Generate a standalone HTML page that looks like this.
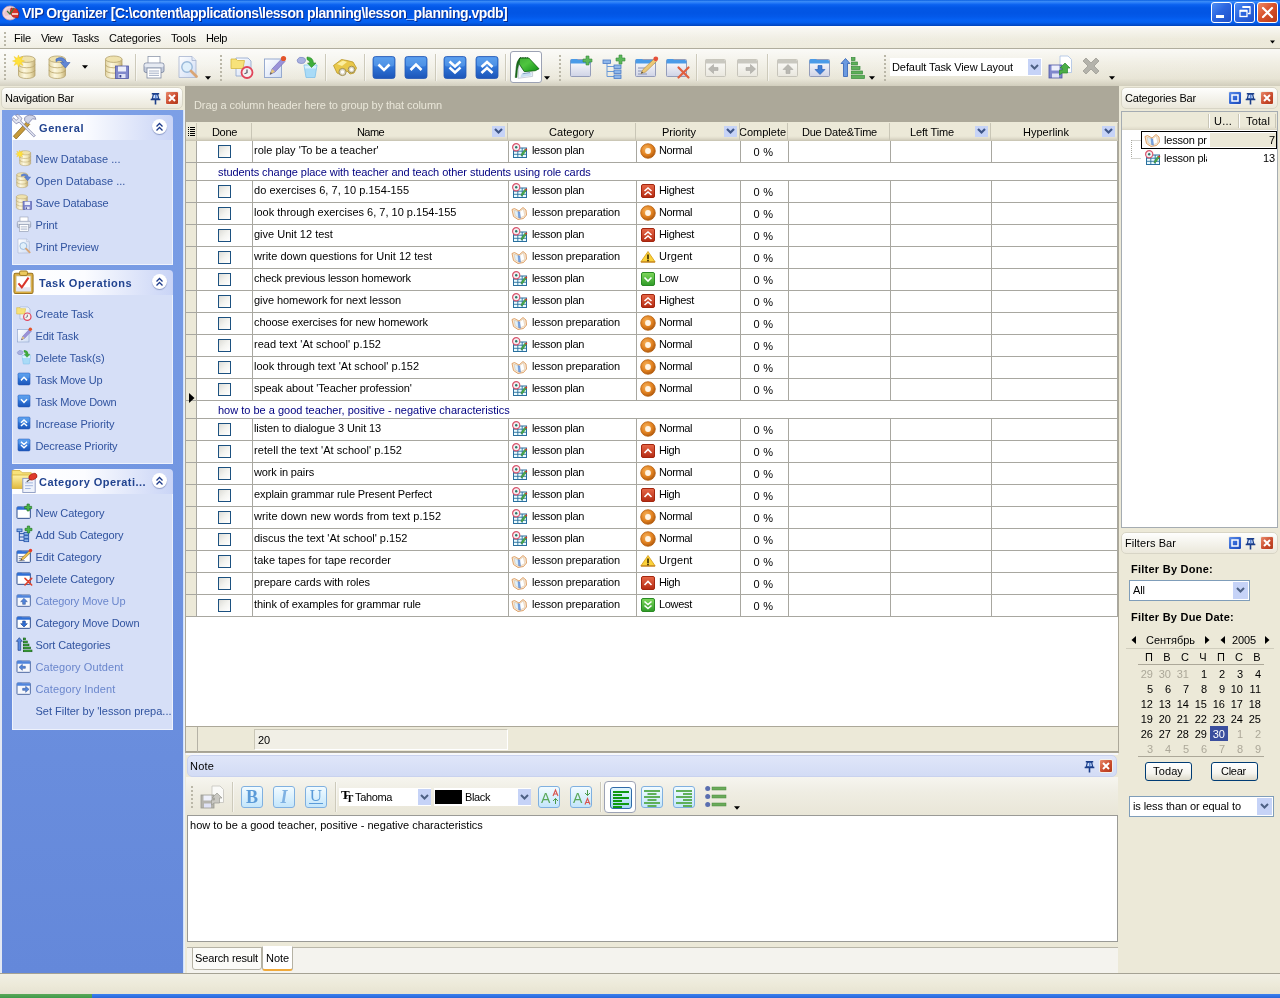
<!DOCTYPE html>
<html lang="en"><head><meta charset="utf-8"><title>VIP Organizer</title>
<style>
*{box-sizing:border-box;margin:0;padding:0}
html,body{width:1280px;height:998px;overflow:hidden}
body{will-change:transform;background:#ece9d8;font-family:"Liberation Sans","DejaVu Sans",sans-serif;font-size:11px;color:#000;position:relative;line-height:13px}
.a{position:absolute}
.t{position:absolute;white-space:nowrap;line-height:13px;height:13px}
svg{position:absolute;overflow:visible}
#title{left:0;top:0;width:1280px;height:26px;background:linear-gradient(to bottom,#0a5fe0 0%,#3a8bf7 6%,#2a7ef8 10%,#0b62f0 18%,#0257e6 30%,#0255e4 50%,#0359ea 64%,#0662f4 78%,#0560ee 86%,#0352d8 93%,#0143b8 100%)}
#title .tt{font-size:14px;font-weight:bold;color:#fff;line-height:16px;height:16px;text-shadow:1px 1px 0 #0a2a8a}
.cb{position:absolute;top:2px;width:21px;height:21px;border:1px solid #fff;border-radius:3px}
.cb.b{background:linear-gradient(135deg,#4f8ff5 0%,#2c66e0 45%,#1f50c8 100%)}
.cb.r{background:linear-gradient(135deg,#ec8a66 0%,#d9532c 45%,#b93a17 100%)}
#menu{left:0;top:26px;width:1280px;height:22px;background:linear-gradient(to bottom,#ffffff 0,rgba(255,255,255,.6) 2px,rgba(255,255,255,0) 60%,rgba(236,233,216,.5) 100%),linear-gradient(to right,#f6f5ef 0%,#f1efe5 50%,#edeadb 100%)}
#tb{left:0;top:49px;width:1280px;height:37px;background:linear-gradient(to bottom,rgba(255,255,255,.75) 0,rgba(255,255,255,.25) 40%,rgba(225,221,204,.35) 80%,rgba(200,196,178,.75) 100%),linear-gradient(to right,#f4f3ec 0%,#efede2 50%,#ebe8d9 100%)}
.sep{position:absolute;top:5px;width:1px;height:27px;background:#cdcabb;box-shadow:1px 0 0 rgba(255,255,255,.5)}
.grip{position:absolute;width:2px;background-image:linear-gradient(to bottom,#bab7a8 0,#bab7a8 2px,transparent 2px,transparent 4px);background-size:2px 4px}
.pressed{position:absolute;border:1px solid #9ca2b4;border-radius:3px;background:#fff}
.ph{position:absolute;height:22px;border:1px solid #d8d5c6;border-radius:5px;background:linear-gradient(to bottom,#fefefd 0%,#f4f3ec 50%,#ebe8db 100%)}
.xb{position:absolute;width:14px;height:14px;border-radius:2px;background:linear-gradient(135deg,#e9896a,#c8482a 60%,#b13a1c);border:1px solid #f3f0ea}
.mb{position:absolute;width:14px;height:14px;border-radius:2px;background:linear-gradient(135deg,#5f8fe8,#2b5fd0 60%,#1e49b4);border:1px solid #f3f0ea}
#nav{left:2px;top:110px;width:181px;height:863px;background:linear-gradient(to bottom,#7c9fe6 0%,#7397e2 40%,#698ddd 75%,#6488da 100%)}
.gh{position:absolute;left:10px;width:161px;height:25px;border-radius:4px 4px 0 0;background:linear-gradient(to right,#ffffff 0%,#fbfcff 45%,#c9d4f6 100%)}
.gh .t{font-weight:bold;color:#21438f}
.gb{position:absolute;left:10px;width:161px;background:#d6dff7;border:1px solid #eef2fc;border-top:0}
.ni{position:absolute;color:#30539f;white-space:nowrap;height:13px;line-height:13px}
.ni.d{color:#6a86cc}
.chev{position:absolute;left:140px;top:4px;width:15px;height:15px;border-radius:50%;background:#fff;box-shadow:0 1px 1px rgba(60,80,140,.45)}
#gridbox{left:185px;top:86px;width:934px;height:667px;background:#fff;border:1px solid #aca899;border-top:0;overflow:hidden}
#gby{left:0;top:0;width:933px;height:36px;background:#aca899}
#gby .t{color:#e9e6d8}
#ghead{left:0;top:36px;width:933px;height:19px;background:linear-gradient(to bottom,#ece9d8 0,#ece9d8 14px,#e2decd 16px,#d2cebd 18px,#c4c0ae 19px)}
.hc{position:absolute;top:1px;height:17px;border-right:1px solid #c9c6b6;overflow:hidden}
.fb{position:absolute;width:13px;height:11px;background:#c6d3f7}
.row{position:absolute;left:0;width:933px;border-bottom:1px solid #a8a7a0}
.row .ind{position:absolute;left:0;top:0;bottom:0;width:11px;background:#ece9d8;border-right:1px solid #a8a7a0}
.vl{position:absolute;top:0;bottom:0;width:1px;background:#a8a7a0}
.ck{position:absolute;left:32px;top:4px;width:13px;height:13px;border:1px solid #1c5180;background:linear-gradient(135deg,#dcdcd7 0%,#f3f3ef 50%,#fff 100%)}
.pv{color:#000080}
#gfoot{left:0;top:640px;width:933px;height:27px;background:#ece9d8;border-top:1px solid #aca899;border-bottom:2px solid #a5a294}
#cnt{left:68px;top:2px;width:254px;height:21px;background:#f1efe6;border:1px solid #c9c6b6;border-right-color:#fff;border-bottom-color:#fff}
#ntb{left:186px;top:777px;width:932px;height:38px;background:linear-gradient(to bottom,#f6f5ef 0%,#efede3 40%,#e9e6d7 100%)}
.nb{position:absolute;width:22px;height:22px;border:1px solid #7fb0e0;border-radius:3px;background:linear-gradient(to bottom,#f2fbff,#c4e6fb)}
.nb.p{border-color:#2f6aa8;background:linear-gradient(to bottom,#e4f6ff,#a9d8f5)}
#nbody{left:187px;top:815px;width:931px;height:127px;background:#fff;border:1px solid #9a9a96}
#tabs{left:187px;top:947px;width:931px;height:27px;background:#f4f3ee;border-top:1px solid #b9b6a8;border-bottom:1px solid #c9c6b8}
.tab{position:absolute;top:-1px;height:23px;border:1px solid #b5b2a4;border-radius:0 0 3px 3px;background:#fbfbf8}
.tab.sel{top:-2px;height:25px;border-bottom:2px solid #f0a93a;background:#fff;border-top-color:#fff}
#ctree{left:1121px;top:111px;width:157px;height:417px;background:#fff;border:1px solid #a5acb2}
#filt{left:1121px;top:555px;width:156px;height:400px}
.cbx{position:absolute;background:#fff;border:1px solid #7f9db9}
.cbtn{position:absolute;background:#c6d3f7}
.btn{position:absolute;height:19px;border:1px solid #003c74;border-radius:3px;background:linear-gradient(to bottom,#fff 0%,#f5f4ee 60%,#dcd8c8 100%)}
#status{left:0;top:973px;width:1280px;height:21px;background:linear-gradient(to bottom,#f1efe4 0,#ece9d8 60%,#e6e3d2 100%);border-top:1px solid #a5a294}
#task{left:0;top:994px;width:1280px;height:4px;background:linear-gradient(to bottom,#3a80f0,#2a66d8)}
#start{left:0;top:0;width:92px;height:4px;background:linear-gradient(to bottom,#5aa85a,#3f9a48)}
</style></head>
<body>
<svg width="0" height="0" style="position:absolute;left:0;top:0"><defs>
<linearGradient id="gdb" x1="0" y1="0" x2="1" y2="0"><stop offset="0" stop-color="#e2d4a0"></stop><stop offset=".35" stop-color="#fdf8e0"></stop><stop offset=".7" stop-color="#f0e5b8"></stop><stop offset="1" stop-color="#c4b078"></stop></linearGradient>
<linearGradient id="gbl" x1="0" y1="0" x2="0" y2="1"><stop offset="0" stop-color="#4f95ea"></stop><stop offset=".5" stop-color="#2f74d6"></stop><stop offset="1" stop-color="#1c55b8"></stop></linearGradient>
<linearGradient id="grd" x1="0" y1="0" x2="0" y2="1"><stop offset="0" stop-color="#e8694a"></stop><stop offset="1" stop-color="#b32a12"></stop></linearGradient>
<linearGradient id="ggr" x1="0" y1="0" x2="0" y2="1"><stop offset="0" stop-color="#7fd95c"></stop><stop offset="1" stop-color="#2f9a28"></stop></linearGradient>
<radialGradient id="gor" cx=".4" cy=".35" r=".7"><stop offset="0" stop-color="#f7b25a"></stop><stop offset=".6" stop-color="#e0801f"></stop><stop offset="1" stop-color="#a9540c"></stop></radialGradient>
<linearGradient id="gwin" x1="0" y1="0" x2="0" y2="1"><stop offset="0" stop-color="#ffffff"></stop><stop offset="1" stop-color="#cfd3e6"></stop></linearGradient>
<linearGradient id="gwing" x1="0" y1="0" x2="0" y2="1"><stop offset="0" stop-color="#fdfdfb"></stop><stop offset="1" stop-color="#e9e7de"></stop></linearGradient>
<linearGradient id="gpg" x1="0" y1="0" x2="1" y2="1"><stop offset="0" stop-color="#ffffff"></stop><stop offset="1" stop-color="#cfdcf4"></stop></linearGradient>
<linearGradient id="gbtn" x1="0" y1="0" x2="0" y2="1"><stop offset="0" stop-color="#e9f6ff"></stop><stop offset="1" stop-color="#b4dcf7"></stop></linearGradient>
<linearGradient id="gnb" x1="0" y1="0" x2="1" y2="1"><stop offset="0" stop-color="#3fae35"></stop><stop offset=".4" stop-color="#4fc53f"></stop><stop offset="1" stop-color="#0f8f14"></stop></linearGradient>
<linearGradient id="gyl" x1="0" y1="0" x2="0" y2="1"><stop offset="0" stop-color="#fff3a8"></stop><stop offset="1" stop-color="#e0b93c"></stop></linearGradient>
</defs></svg>
<div class="a" id="title">
<svg style="left:2px;top:4px" width="16" height="16" viewBox="0 0 16 16"><ellipse cx="8" cy="9" rx="7.500" ry="7" fill="#f3d7dc" stroke="#c9a3b0" stroke-width=".8"></ellipse><path d="M2 9q3-6 8-5l2 3-4 4-5 1z" fill="#e9c3cc"></path><path d="M9 4l6 1 2 4-1 5-5-1-3-4z" fill="#d8352a" stroke="#9c1a14" stroke-width=".6"></path><path d="M5 7l3 3 4-6" fill="none" stroke="#3a7a3a" stroke-width="1.200"></path><path d="M10 10h6" stroke="#fff" stroke-width="1.400"></path></svg>
<div class="t tt" style="left: 22px; top: 5px; letter-spacing: -0.48px;">VIP Organizer [C:\content\applications\lesson planning\lesson_planning.vpdb]</div>
<div class="cb b" style="left:1211px"><svg style="left:4px;top:12px" width="8" height="3" viewBox="0 0 8 3"><rect width="8" height="3" fill="#fff"></rect></svg>
</div>
<div class="cb b" style="left:1234px"><svg style="left:4px;top:3px" width="12" height="12" viewBox="0 0 12 12"><path d="M3.500 1h7.500v6.500h-2" fill="none" stroke="#fff" stroke-width="1.300"></path><path d="M3.500 1h7.500" stroke="#fff" stroke-width="2"></path><rect x="1" y="4.500" width="7" height="6" fill="none" stroke="#fff" stroke-width="1.300"></rect><path d="M1 4.800h7" stroke="#fff" stroke-width="2"></path></svg>
</div>
<div class="cb r" style="left:1257px"><svg style="left:4px;top:4px" width="11" height="11" viewBox="0 0 11 11"><path d="M1 1l9 9M10 1l-9 9" stroke="#fff" stroke-width="2.200" stroke-linecap="round"></path></svg>
</div>
</div>
<div class="a" id="menu">
<div class="grip" style="left:4px;top:6px;height:16px"></div>
<div class="t" style="left: 14px; top: 6px; letter-spacing: -0.18px;">File</div>
<div class="t" style="left: 41px; top: 6px; letter-spacing: -0.66px;">View</div>
<div class="t" style="left: 72px; top: 6px; letter-spacing: -0.22px;">Tasks</div>
<div class="t" style="left: 109px; top: 6px; letter-spacing: -0.12px;">Categories</div>
<div class="t" style="left: 171px; top: 6px; letter-spacing: -0.14px;">Tools</div>
<div class="t" style="left: 206px; top: 6px; letter-spacing: -0.41px;">Help</div>
<svg style="left:1270px;top:14px" width="5" height="4" viewBox="0 0 7 4"><path d="M0 0h7l-3.500 4z" fill="#000"></path></svg>
</div>
<div class="a" style="left:0;top:48px;width:1280px;height:1px;background:#b0ad9e"></div>
<div class="a" id="tb">
<div class="grip" style="left:4px;top:5px;height:26px"></div>
<div class="a pressed" style="left:510px;top:2px;width:32px;height:32px;"></div>
<svg style="left:515px;top:6px" width="24" height="24" viewBox="0 0 24 24"><path d="M3.900 9l-.7 14.300 14.400-1.900v-4.400l-8.300-.4z" fill="#f4f8fd" stroke="#b4bccb" stroke-width=".7"></path><path d="M6 19.500l10.500-1.800v2.800l-11 1.800z" fill="#c9def2"></path><path d="M7.500 18.800l7.500-1.200" stroke="#5f86b0" stroke-width=".8"></path><path d="M4.700 3h9.100l10.200 10.800-3.700 1.900-11 .9-5.300-8.100z" fill="url(#gnb)" stroke="#0b5f0e" stroke-width=".8" stroke-linejoin="round"></path><path d="M4.700 3q-3 3-3.500 9t-1 10.500h1.700q0-8 2-14z" fill="#1a6f1d" stroke="#0f5212" stroke-width=".5"></path><path d="M5.500 3.200v-1M7.200 3.200v-1M8.900 3.200v-1M10.600 3.200v-1M12.300 3.200v-1" stroke="#0c4a10" stroke-width=".9"></path></svg>
<svg style="left:13px;top:6px" width="24" height="24" viewBox="0 0 24 24"><path d="M5.5 4.2 v16.1 a8.25 3.2 0 0 0 16.5 0 v-16.1 z" fill="url(#gdb)" stroke="#b5a370" stroke-width=".8"></path><ellipse cx="13.75" cy="4.2" rx="8.25" ry="3.2" fill="#efe2ae" stroke="#b5a370" stroke-width=".8"></ellipse><path d="M5.5 9.566666666666666 a8.25 3.2 0 0 0 16.5 0" fill="none" stroke="#b7a36a" stroke-width=".8"></path><path d="M5.5 14.933333333333334 a8.25 3.2 0 0 0 16.5 0" fill="none" stroke="#b7a36a" stroke-width=".8"></path><path d="M5.5 0 l1.2 3.3 3.3-1.8-1.8 3.3 3.3 1.2-3.3 1.2 1.8 3.3-3.3-1.8-1.2 3.3-1.2-3.3-3.3 1.8 1.8-3.3-3.3-1.2 3.3-1.2-1.8-3.300 3.300 1.800z" fill="#ffe23a" stroke="#f3c41a" stroke-width=".4"></path></svg>
<svg style="left:48px;top:6px" width="24" height="24" viewBox="0 0 24 24"><path d="M1 4.2 v16.1 a8.25 3.2 0 0 0 16.5 0 v-16.1 z" fill="url(#gdb)" stroke="#b5a370" stroke-width=".8"></path><ellipse cx="9.25" cy="4.2" rx="8.25" ry="3.2" fill="#efe2ae" stroke="#b5a370" stroke-width=".8"></ellipse><path d="M1 9.566666666666666 a8.25 3.2 0 0 0 16.5 0" fill="none" stroke="#b7a36a" stroke-width=".8"></path><path d="M1 14.933333333333334 a8.25 3.2 0 0 0 16.5 0" fill="none" stroke="#b7a36a" stroke-width=".8"></path><path d="M8 4q7-4 11 3.500h3l-4.500 5.500-5-5.500h3q-2.500-3.500-7.500-1z" fill="#5f86d6" stroke="#3e62b0" stroke-width=".6"></path></svg>
<svg style="left:105px;top:6px" width="24" height="24" viewBox="0 0 24 24"><path d="M0.5 4.2 v16.1 a8.25 3.2 0 0 0 16.5 0 v-16.1 z" fill="url(#gdb)" stroke="#b5a370" stroke-width=".8"></path><ellipse cx="8.75" cy="4.2" rx="8.25" ry="3.2" fill="#efe2ae" stroke="#b5a370" stroke-width=".8"></ellipse><path d="M0.5 9.566666666666666 a8.25 3.2 0 0 0 16.5 0" fill="none" stroke="#b7a36a" stroke-width=".8"></path><path d="M0.5 14.933333333333334 a8.25 3.2 0 0 0 16.5 0" fill="none" stroke="#b7a36a" stroke-width=".8"></path><rect x="10.500" y="11" width="13" height="12.500" fill="#8088cc" stroke="#5058a6" stroke-width=".8"></rect><rect x="13" y="11.500" width="8" height="5" fill="#eceefb"></rect><rect x="13.500" y="19" width="7" height="4" fill="#dfe2f6"></rect><rect x="14.500" y="20" width="1.800" height="2.500" fill="#3c4590"></rect></svg>
<svg style="left:142px;top:6px" width="24" height="24" viewBox="0 0 24 24"><rect x="6" y="1.500" width="12" height="7.500" fill="#fff" stroke="#8e98ac" stroke-width=".8"></rect><rect x="2" y="8" width="20" height="9.500" rx="2" fill="#c3cbdb" stroke="#76829c" stroke-width=".8"></rect><rect x="2.500" y="8.500" width="19" height="3.500" rx="1.500" fill="#e6eaf2"></rect><rect x="5" y="13" width="14" height="10" fill="#fff" stroke="#7f8aa2" stroke-width=".8"></rect><path d="M7 16h10M7 18.200h10M7 20.400h10" stroke="#9aa6c0" stroke-width=".9"></path></svg>
<svg style="left:176px;top:6px" width="24" height="24" viewBox="0 0 24 24"><path d="M3 1.500h13l4 4v17h-17z" fill="url(#gpg)" stroke="#a7b4cf" stroke-width=".8"></path><path d="M16 1.500v4h4" fill="#e4ebf8" stroke="#a7b4cf" stroke-width=".8"></path><circle cx="11" cy="12" r="5.200" fill="#dff0fb" fill-opacity=".9" stroke="#9ab9da" stroke-width="1.400"></circle><path d="M15 16l5.500 5.500" stroke="#d9a574" stroke-width="2.800" stroke-linecap="round"></path></svg>
<svg style="left:230px;top:6px" width="24" height="24" viewBox="0 0 24 24"><path d="M6 3h12l3 3v15h-15z" fill="url(#gpg)" stroke="#8ea3cc" stroke-width=".8"></path><path d="M1 4h5l1.500 1.500h7l-1.500 8h-12z" fill="#f7e27a" stroke="#d4b840" stroke-width=".8"></path><circle cx="17" cy="17.500" r="5.500" fill="#f4f1f1" stroke="#e0455a" stroke-width="1.800"></circle><path d="M17 14.500v3.200l-2.500 1" stroke="#556" stroke-width="1.200" fill="none"></path></svg>
<svg style="left:262px;top:6px" width="24" height="24" viewBox="0 0 24 24"><rect x="2.500" y="4" width="17" height="18.500" fill="url(#gpg)" stroke="#8ea3cc" stroke-width=".9"></rect><path d="M8 19.500l2-5.500 10-10.500 3 3-10 10.500z" fill="#9a92d8" stroke="#6b63b0" stroke-width=".6"></path><path d="M8 19.500l2-5.500 3 2.500z" fill="#e6c77a"></path><path d="M8 19.500l.8-2.200 1.300 1z" fill="#444"></path><circle cx="21.500" cy="3.500" r="2.600" fill="#e3542a"></circle></svg>
<svg style="left:295px;top:6px" width="24" height="24" viewBox="0 0 24 24"><path d="M9 10h13l-2 12.500h-9z" fill="#a9dbf7" stroke="#7fc0ea" stroke-width=".8"></path><path d="M9.500 10.500h12l-.5 3h-11z" fill="#d8f0fc"></path><path d="M2 5q2-4 6-2.500 3 .5 2.500 3.500-1 3-4.500 2.500-4 0-4-3.500z" fill="#a9b1e0" stroke="#7c86c4" stroke-width=".7"></path><path d="M12 2q6 0 6.500 6h2.500l-4.500 4.500-4-4.500h2.500q-.5-3-3-3.500z" fill="#3fae3a" stroke="#2a8a28" stroke-width=".6"></path></svg>
<svg style="left:333px;top:6px" width="24" height="24" viewBox="0 0 24 24"><path d="M.5 10.500l8-6 5.500 1 6 1.500 3.500 6-2.500 5-4 1-3-3-2 1-3.500 3-4.500-2z" fill="#e9c84a" stroke="#b99524" stroke-width=".8"></path><path d="M4 9l6-3.500 4 1.500-5 4z" fill="#fbeea0"></path><circle cx="9.500" cy="17" r="3.600" fill="#d9d4c4" stroke="#9c8a4a" stroke-width=".9"></circle><circle cx="9.500" cy="17" r="1.700" fill="#fff"></circle><circle cx="18.500" cy="14.500" r="3.300" fill="#d9d4c4" stroke="#9c8a4a" stroke-width=".9"></circle><circle cx="18.500" cy="14.500" r="1.500" fill="#fff"></circle></svg>
<svg style="left:372px;top:6px" width="24" height="24" viewBox="0 0 24 24"><rect x="1" y="1.500" width="22" height="22" rx="2.500" fill="url(#gbl)" stroke="#2458b4" stroke-width=".8"></rect><rect x="2" y="2.500" width="20" height="9" rx="2" fill="#6fb0f5" fill-opacity=".45"></rect><path d="M6.500 9.500l5.500 5.500 5.500-5.500" fill="none" stroke="#fff" stroke-width="2.600" stroke-linejoin="miter"></path></svg>
<svg style="left:404px;top:6px" width="24" height="24" viewBox="0 0 24 24"><rect x="1" y="1.500" width="22" height="22" rx="2.500" fill="url(#gbl)" stroke="#2458b4" stroke-width=".8"></rect><rect x="2" y="2.500" width="20" height="9" rx="2" fill="#6fb0f5" fill-opacity=".45"></rect><path d="M6.500 15l5.500-5.500 5.500 5.500" fill="none" stroke="#fff" stroke-width="2.600" stroke-linejoin="miter"></path></svg>
<svg style="left:443px;top:6px" width="24" height="24" viewBox="0 0 24 24"><rect x="1" y="1.500" width="22" height="22" rx="2.500" fill="url(#gbl)" stroke="#2458b4" stroke-width=".8"></rect><rect x="2" y="2.500" width="20" height="9" rx="2" fill="#6fb0f5" fill-opacity=".45"></rect><path d="M6.500 6.500l5.500 5 5.500-5M6.500 12.500l5.500 5 5.500-5" fill="none" stroke="#fff" stroke-width="2.600" stroke-linejoin="miter"></path></svg>
<svg style="left:475px;top:6px" width="24" height="24" viewBox="0 0 24 24"><rect x="1" y="1.500" width="22" height="22" rx="2.500" fill="url(#gbl)" stroke="#2458b4" stroke-width=".8"></rect><rect x="2" y="2.500" width="20" height="9" rx="2" fill="#6fb0f5" fill-opacity=".45"></rect><path d="M6.500 12l5.500-5 5.500 5M6.500 18l5.500-5 5.500 5" fill="none" stroke="#fff" stroke-width="2.600" stroke-linejoin="miter"></path></svg>
<svg style="left:569px;top:6px" width="24" height="24" viewBox="0 0 24 24"><rect x="1.500" y="4.500" width="20" height="17" rx="1" fill="url(#gwin)" stroke="#8a94b4" stroke-width=".9"></rect><path d="M1.500 5.500a1.500 1.500 0 0 1 1.500-1.500h5l1 1h11a1.500 1.500 0 0 1 1.500 1.500v2h-20z" fill="#4a9be8"></path><path d="M14 4h3v-3h3v3h3v3h-3v3h-3v-3h-3z" fill="#5cb85a" stroke="#3a8a3c" stroke-width=".6"></path></svg>
<svg style="left:601px;top:6px" width="24" height="24" viewBox="0 0 24 24"><path d="M6 7v14.500M6 11.500h7M6 16.500h7M6 21.500h7" stroke="#6a9ad8" stroke-width="1" fill="none"></path><rect x="2" y="5" width="7.500" height="3.500" fill="#8fb7ea" stroke="#4a7ac6" stroke-width=".8"></rect><rect x="13" y="10" width="7" height="3.500" fill="#8fb7ea" stroke="#4a7ac6" stroke-width=".8"></rect><rect x="13" y="15" width="7" height="3.500" fill="#8fb7ea" stroke="#4a7ac6" stroke-width=".8"></rect><rect x="13" y="20" width="7" height="3.500" fill="#8fb7ea" stroke="#4a7ac6" stroke-width=".8"></rect><path d="M15 3h3v-3h3v3h3v3h-3v3h-3v-3h-3z" fill="#5cb85a" stroke="#3a8a3c" stroke-width=".6"></path></svg>
<svg style="left:634px;top:6px" width="24" height="24" viewBox="0 0 24 24"><rect x="1.500" y="4.500" width="20" height="17" rx="1" fill="url(#gwin)" stroke="#8a94b4" stroke-width=".9"></rect><path d="M1.500 5.500a1.500 1.500 0 0 1 1.500-1.500h5l1 1h11a1.500 1.500 0 0 1 1.500 1.500v2h-20z" fill="#4a9be8"></path><path d="M4 13h9M4 16h7M4 19h9" stroke="#8a94b4" stroke-width="1"></path><path d="M7 18.500l2-4 11-10.500 2.500 2.500-11 10.500z" fill="#ecc876" stroke="#b08a3a" stroke-width=".6"></path><path d="M7 18.500l.9-2 1.200 1.200z" fill="#444"></path><circle cx="21.800" cy="3.800" r="2.400" fill="#e6503a"></circle></svg>
<svg style="left:665px;top:6px" width="24" height="24" viewBox="0 0 24 24"><rect x="1.500" y="4.500" width="20" height="17" rx="1" fill="url(#gwin)" stroke="#8a94b4" stroke-width=".9"></rect><path d="M1.500 5.500a1.500 1.500 0 0 1 1.500-1.500h5l1 1h11a1.500 1.500 0 0 1 1.500 1.500v2h-20z" fill="#4a9be8"></path><path d="M13.500 12.500l10 10M23.500 12.500l-10 10" stroke="#e0603f" stroke-width="2.200" stroke-linecap="round"></path></svg>
<svg style="left:704px;top:6px" width="24" height="24" viewBox="0 0 24 24"><rect x="1.500" y="4.500" width="20" height="17" rx="1" fill="url(#gwing)" stroke="#c2c0b6" stroke-width=".9"></rect><path d="M1.500 5.500a1.500 1.500 0 0 1 1.500-1.500h5l1 1h11a1.500 1.500 0 0 1 1.500 1.500v2h-20z" fill="#c9c8c0"></path><path d="M4.500 14l5-4.500v3h4.500v3h-4.500v3z" fill="#b9b8b2" stroke="#a9a8a2" stroke-width=".6"></path></svg>
<svg style="left:736px;top:6px" width="24" height="24" viewBox="0 0 24 24"><rect x="1.500" y="4.500" width="20" height="17" rx="1" fill="url(#gwing)" stroke="#c2c0b6" stroke-width=".9"></rect><path d="M1.500 5.500a1.500 1.500 0 0 1 1.500-1.500h5l1 1h11a1.500 1.500 0 0 1 1.500 1.500v2h-20z" fill="#c9c8c0"></path><path d="M19.500 14l-5-4.500v3h-4.500v3h4.500v3z" fill="#b9b8b2" stroke="#a9a8a2" stroke-width=".6"></path></svg>
<svg style="left:776px;top:6px" width="24" height="24" viewBox="0 0 24 24"><rect x="1.500" y="4.500" width="20" height="17" rx="1" fill="url(#gwing)" stroke="#c2c0b6" stroke-width=".9"></rect><path d="M1.500 5.500a1.500 1.500 0 0 1 1.500-1.500h5l1 1h11a1.500 1.500 0 0 1 1.500 1.500v2h-20z" fill="#c9c8c0"></path><path d="M12 9.500l5 5h-3v4h-4v-4h-3z" fill="#b9b8b2" stroke="#a9a8a2" stroke-width=".6"></path></svg>
<svg style="left:808px;top:6px" width="24" height="24" viewBox="0 0 24 24"><rect x="1.500" y="4.500" width="20" height="17" rx="1" fill="url(#gwin)" stroke="#8a94b4" stroke-width=".9"></rect><path d="M1.500 5.500a1.500 1.500 0 0 1 1.500-1.500h5l1 1h11a1.500 1.500 0 0 1 1.500 1.500v2h-20z" fill="#4a9be8"></path><path d="M12 19.500l5-5h-3v-4h-4v4h-3z" fill="#3f7fd6" stroke="#2559b0" stroke-width=".6"></path></svg>
<svg style="left:840px;top:6px" width="24" height="24" viewBox="0 0 24 24"><path d="M5.500 3.500l4.500 5h-2.500v13h-4v-13h-2.500z" fill="#6a9ae0" stroke="#2f5fb4" stroke-width=".8"></path><rect x="11.500" y="2.5" width="3.5" height="3" fill="#5fb05a" stroke="#3a8a3c" stroke-width=".7"></rect><rect x="11.500" y="7" width="6" height="3" fill="#5fb05a" stroke="#3a8a3c" stroke-width=".7"></rect><rect x="11.500" y="11.5" width="8.5" height="3" fill="#5fb05a" stroke="#3a8a3c" stroke-width=".7"></rect><rect x="11.500" y="16" width="11" height="3" fill="#5fb05a" stroke="#3a8a3c" stroke-width=".7"></rect><rect x="11.500" y="20.5" width="13" height="3" fill="#5fb05a" stroke="#3a8a3c" stroke-width=".7"></rect></svg>
<svg style="left:1048px;top:6px" width="24" height="24" viewBox="0 0 24 24"><path d="M12 1h8l3.500 3.500v13h-11.500z" fill="#fff" stroke="#a9c0e4" stroke-width=".8"></path><rect x="1" y="10" width="13" height="13" fill="#7f87cc" stroke="#4d56a3" stroke-width=".8"></rect><rect x="3.500" y="10.500" width="8" height="5" fill="#eef0fb"></rect><rect x="4" y="18.500" width="7" height="4" fill="#dfe2f5"></rect><path d="M17 8l5 5h-2.500v5h-5.500l-2.500 2v-5h3v-2h-2.500z" fill="#4cae48" stroke="#2c8a2e" stroke-width=".7"></path></svg>
<svg style="left:1079px;top:6px" width="24" height="24" viewBox="0 0 24 24"><path d="M4 6l3-3 5 5 5-5 3 3-5 5 5 5-3 3-5-5-5 5-3-3 5-5z" fill="#b4b3ab" stroke="#9d9c94" stroke-width=".8"></path></svg>
<div class="sep" style="left:135px"></div>
<div class="sep" style="left:325px"></div>
<div class="sep" style="left:364px"></div>
<div class="sep" style="left:435px"></div>
<div class="sep" style="left:505px"></div>
<div class="sep" style="left:696px"></div>
<div class="sep" style="left:767px"></div>
<div class="grip" style="left:220px;top:6px;height:26px"></div>
<div class="grip" style="left:559px;top:6px;height:26px"></div>
<div class="grip" style="left:884px;top:6px;height:26px"></div>
<svg style="left:82px;top:16px" width="6" height="4" viewBox="0 0 7 4"><path d="M0 0h7l-3.500 4z" fill="#000"></path></svg>
<svg style="left:205px;top:27px" width="6" height="4" viewBox="0 0 7 4"><path d="M0 0h7l-3.500 4z" fill="#000"></path></svg>
<svg style="left:544px;top:27px" width="6" height="4" viewBox="0 0 7 4"><path d="M0 0h7l-3.500 4z" fill="#000"></path></svg>
<svg style="left:869px;top:27px" width="6" height="4" viewBox="0 0 7 4"><path d="M0 0h7l-3.500 4z" fill="#000"></path></svg>
<svg style="left:1109px;top:27px" width="6" height="4" viewBox="0 0 7 4"><path d="M0 0h7l-3.500 4z" fill="#000"></path></svg>
<div class="cbx" style="left:890px;top:9px;width:152px;height:18px;border:0"><div class="t" style="left: 2px; top: 3px; letter-spacing: -0.09px;">Default Task View Layout</div>
<div class="cbtn" style="right:1px;top:1px;width:13px;height:16px"><svg style="left:2px;top:5px" width="9" height="7" viewBox="0 0 9 7"><path d="M1 1l3.500 3.500 3.500-3.500" fill="none" stroke="#4d6185" stroke-width="2"></path></svg>
</div></div>
</div>
<div class="a" style="left:0;top:110px;width:2px;height:863px;background:#e3e8f3"></div>
<div class="ph" style="left:1px;top:87px;width:182px;"><div class="t" style="left: 3px; top: 4px; letter-spacing: -0.23px;">Navigation Bar</div>
<div class="xb" style="left:163px;top:3px"><svg style="left:0px;top:0px" width="12" height="12" viewBox="0 0 12 12"><path d="M3 3l6 6M9 3l-6 6" stroke="#fff" stroke-width="2"></path></svg>
</div><svg style="left:147px;top:4px" width="13" height="13" viewBox="0 0 14 14"><path d="M4.800 2.200h4.400l1.300 5.300h-7z" fill="#cfe0fb" stroke="#1c3f8a" stroke-width="1.300" stroke-linejoin="round"></path><path d="M3 1.800h8M1.800 8h10.400M7 8.500v5" fill="none" stroke="#1c3f8a" stroke-width="1.700"></path><path d="M7.300 3v4" stroke="#4a7ad0" stroke-width="1.400"></path></svg>
</div>
<div class="a" id="nav">
<div class="gh" style="top:5px"><div class="t" style="left: 27px; top: 7px; letter-spacing: 0.58px;">General</div>
<div class="chev"><svg style="left:3px;top:3px" width="9" height="9" viewBox="0 0 9 9"><path d="M1.500 4.500l3-3 3 3M1.500 8.500l3-3 3 3" fill="none" stroke="#1c3a8a" stroke-width="1.300"></path></svg>
</div></div>
<svg style="left:8px;top:2px" width="27" height="27" viewBox="0 0 24 24"><path d="M3 21.500l12-13 2.500 2.500-12 13z" fill="#c79a3a" stroke="#8a6a1e" stroke-width=".7"></path><path d="M13 5q4-4 9-1l1 2.500-3-.5-4 4.500-3-3z" fill="#cfd3e6" stroke="#7a80a8" stroke-width=".7"></path><path d="M21 22l-13-13-2.500 1.500-3.500-3.500 1-2 2.500 2.500 2-2-2.500-2.500 2-1 3.500 3.500-1 2.500 13 13z" fill="#e4e6f2" stroke="#7a80a8" stroke-width=".7"></path></svg>
<div class="gb" style="top:30px;height:125px"></div>
<svg style="left:14px;top:40px" width="16" height="16" viewBox="0 0 24 24"><path d="M5.5 4.2 v16.1 a8.25 3.2 0 0 0 16.5 0 v-16.1 z" fill="url(#gdb)" stroke="#b5a370" stroke-width=".8"></path><ellipse cx="13.75" cy="4.2" rx="8.25" ry="3.2" fill="#efe2ae" stroke="#b5a370" stroke-width=".8"></ellipse><path d="M5.5 9.566666666666666 a8.25 3.2 0 0 0 16.5 0" fill="none" stroke="#b7a36a" stroke-width=".8"></path><path d="M5.5 14.933333333333334 a8.25 3.2 0 0 0 16.5 0" fill="none" stroke="#b7a36a" stroke-width=".8"></path><path d="M5.5 0 l1.2 3.3 3.3-1.8-1.8 3.3 3.3 1.2-3.3 1.2 1.8 3.3-3.3-1.8-1.2 3.3-1.2-3.3-3.3 1.8 1.8-3.3-3.3-1.2 3.3-1.2-1.8-3.300 3.300 1.800z" fill="#ffe23a" stroke="#f3c41a" stroke-width=".4"></path></svg>
<div class="ni" style="left: 33.5px; top: 43px; letter-spacing: 0.04px;">New Database ...</div>
<svg style="left:14px;top:62px" width="16" height="16" viewBox="0 0 24 24"><path d="M1 4.2 v16.1 a8.25 3.2 0 0 0 16.5 0 v-16.1 z" fill="url(#gdb)" stroke="#b5a370" stroke-width=".8"></path><ellipse cx="9.25" cy="4.2" rx="8.25" ry="3.2" fill="#efe2ae" stroke="#b5a370" stroke-width=".8"></ellipse><path d="M1 9.566666666666666 a8.25 3.2 0 0 0 16.5 0" fill="none" stroke="#b7a36a" stroke-width=".8"></path><path d="M1 14.933333333333334 a8.25 3.2 0 0 0 16.5 0" fill="none" stroke="#b7a36a" stroke-width=".8"></path><path d="M8 4q7-4 11 3.500h3l-4.500 5.500-5-5.500h3q-2.500-3.500-7.500-1z" fill="#5f86d6" stroke="#3e62b0" stroke-width=".6"></path></svg>
<div class="ni" style="left: 33.5px; top: 65px; letter-spacing: 0.04px;">Open Database ...</div>
<svg style="left:14px;top:84px" width="16" height="16" viewBox="0 0 24 24"><path d="M0.5 4.2 v16.1 a8.25 3.2 0 0 0 16.5 0 v-16.1 z" fill="url(#gdb)" stroke="#b5a370" stroke-width=".8"></path><ellipse cx="8.75" cy="4.2" rx="8.25" ry="3.2" fill="#efe2ae" stroke="#b5a370" stroke-width=".8"></ellipse><path d="M0.5 9.566666666666666 a8.25 3.2 0 0 0 16.5 0" fill="none" stroke="#b7a36a" stroke-width=".8"></path><path d="M0.5 14.933333333333334 a8.25 3.2 0 0 0 16.5 0" fill="none" stroke="#b7a36a" stroke-width=".8"></path><rect x="10.500" y="11" width="13" height="12.500" fill="#8088cc" stroke="#5058a6" stroke-width=".8"></rect><rect x="13" y="11.500" width="8" height="5" fill="#eceefb"></rect><rect x="13.500" y="19" width="7" height="4" fill="#dfe2f6"></rect><rect x="14.500" y="20" width="1.800" height="2.500" fill="#3c4590"></rect></svg>
<div class="ni" style="left: 33.5px; top: 87px; letter-spacing: -0.17px;">Save Database</div>
<svg style="left:14px;top:106px" width="16" height="16" viewBox="0 0 24 24"><rect x="6" y="1.500" width="12" height="7.500" fill="#fff" stroke="#8e98ac" stroke-width=".8"></rect><rect x="2" y="8" width="20" height="9.500" rx="2" fill="#c3cbdb" stroke="#76829c" stroke-width=".8"></rect><rect x="2.500" y="8.500" width="19" height="3.500" rx="1.500" fill="#e6eaf2"></rect><rect x="5" y="13" width="14" height="10" fill="#fff" stroke="#7f8aa2" stroke-width=".8"></rect><path d="M7 16h10M7 18.200h10M7 20.400h10" stroke="#9aa6c0" stroke-width=".9"></path></svg>
<div class="ni" style="left: 33.5px; top: 109px; letter-spacing: -0.12px;">Print</div>
<svg style="left:14px;top:128px" width="16" height="16" viewBox="0 0 24 24"><path d="M3 1.500h13l4 4v17h-17z" fill="url(#gpg)" stroke="#a7b4cf" stroke-width=".8"></path><path d="M16 1.500v4h4" fill="#e4ebf8" stroke="#a7b4cf" stroke-width=".8"></path><circle cx="11" cy="12" r="5.200" fill="#dff0fb" fill-opacity=".9" stroke="#9ab9da" stroke-width="1.400"></circle><path d="M15 16l5.500 5.500" stroke="#d9a574" stroke-width="2.800" stroke-linecap="round"></path></svg>
<div class="ni" style="left: 33.5px; top: 131px; letter-spacing: -0.14px;">Print Preview</div>
<div class="gh" style="top:160px"><div class="t" style="left: 27px; top: 7px; letter-spacing: 0.51px;">Task Operations</div>
<div class="chev"><svg style="left:3px;top:3px" width="9" height="9" viewBox="0 0 9 9"><path d="M1.500 4.500l3-3 3 3M1.500 8.500l3-3 3 3" fill="none" stroke="#1c3a8a" stroke-width="1.300"></path></svg>
</div></div>
<svg style="left:8px;top:157px" width="27" height="27" viewBox="0 0 24 24"><rect x="3.500" y="5.500" width="17" height="18" rx="1.500" fill="#dcae42" stroke="#9a7420" stroke-width=".9"></rect><rect x="5.500" y="8" width="13" height="13.500" fill="#fff" stroke="#c9c2a8" stroke-width=".6"></rect><path d="M5.500 18l13 0 0 3.500-13 0z" fill="#e4e4ee"></path><rect x="8.500" y="3.500" width="7" height="4" rx="1.200" fill="#ecca5e" stroke="#9a7420" stroke-width=".8"></rect><path d="M7.500 14.500l3 3.500 6-8.500" fill="none" stroke="#d9352a" stroke-width="1.800"></path></svg>
<div class="gb" style="top:185px;height:169px"></div>
<svg style="left:14px;top:195px" width="16" height="16" viewBox="0 0 24 24"><path d="M6 3h12l3 3v15h-15z" fill="url(#gpg)" stroke="#8ea3cc" stroke-width=".8"></path><path d="M1 4h5l1.500 1.500h7l-1.500 8h-12z" fill="#f7e27a" stroke="#d4b840" stroke-width=".8"></path><circle cx="17" cy="17.500" r="5.500" fill="#f4f1f1" stroke="#e0455a" stroke-width="1.800"></circle><path d="M17 14.500v3.200l-2.500 1" stroke="#556" stroke-width="1.200" fill="none"></path></svg>
<div class="ni" style="left: 33.5px; top: 198px; letter-spacing: -0.05px;">Create Task</div>
<svg style="left:14px;top:217px" width="16" height="16" viewBox="0 0 24 24"><rect x="2.500" y="4" width="17" height="18.500" fill="url(#gpg)" stroke="#8ea3cc" stroke-width=".9"></rect><path d="M8 19.500l2-5.500 10-10.500 3 3-10 10.500z" fill="#9a92d8" stroke="#6b63b0" stroke-width=".6"></path><path d="M8 19.500l2-5.500 3 2.500z" fill="#e6c77a"></path><path d="M8 19.500l.8-2.200 1.300 1z" fill="#444"></path><circle cx="21.500" cy="3.500" r="2.600" fill="#e3542a"></circle></svg>
<div class="ni" style="left: 33.5px; top: 220px; letter-spacing: -0.16px;">Edit Task</div>
<svg style="left:14px;top:239px" width="16" height="16" viewBox="0 0 24 24"><path d="M9 10h13l-2 12.500h-9z" fill="#a9dbf7" stroke="#7fc0ea" stroke-width=".8"></path><path d="M9.500 10.500h12l-.5 3h-11z" fill="#d8f0fc"></path><path d="M2 5q2-4 6-2.500 3 .5 2.500 3.500-1 3-4.500 2.500-4 0-4-3.500z" fill="#a9b1e0" stroke="#7c86c4" stroke-width=".7"></path><path d="M12 2q6 0 6.500 6h2.500l-4.500 4.500-4-4.500h2.500q-.5-3-3-3.500z" fill="#3fae3a" stroke="#2a8a28" stroke-width=".6"></path></svg>
<div class="ni" style="left: 33.5px; top: 242px; letter-spacing: -0.08px;">Delete Task(s)</div>
<svg style="left:14px;top:261px" width="16" height="16" viewBox="-2.500 -2 29 29"><rect x="1" y="1.500" width="22" height="22" rx="2.500" fill="url(#gbl)" stroke="#2458b4" stroke-width=".8"></rect><rect x="2" y="2.500" width="20" height="9" rx="2" fill="#6fb0f5" fill-opacity=".45"></rect><path d="M6.500 15l5.500-5.500 5.500 5.500" fill="none" stroke="#fff" stroke-width="2.600" stroke-linejoin="miter"></path></svg>
<div class="ni" style="left: 33.5px; top: 264px; letter-spacing: -0.23px;">Task Move Up</div>
<svg style="left:14px;top:283px" width="16" height="16" viewBox="-2.500 -2 29 29"><rect x="1" y="1.500" width="22" height="22" rx="2.500" fill="url(#gbl)" stroke="#2458b4" stroke-width=".8"></rect><rect x="2" y="2.500" width="20" height="9" rx="2" fill="#6fb0f5" fill-opacity=".45"></rect><path d="M6.500 9.500l5.500 5.500 5.500-5.500" fill="none" stroke="#fff" stroke-width="2.600" stroke-linejoin="miter"></path></svg>
<div class="ni" style="left: 33.5px; top: 286px; letter-spacing: -0.2px;">Task Move Down</div>
<svg style="left:14px;top:305px" width="16" height="16" viewBox="-2.500 -2 29 29"><rect x="1" y="1.500" width="22" height="22" rx="2.500" fill="url(#gbl)" stroke="#2458b4" stroke-width=".8"></rect><rect x="2" y="2.500" width="20" height="9" rx="2" fill="#6fb0f5" fill-opacity=".45"></rect><path d="M6.500 12l5.500-5 5.500 5M6.500 18l5.500-5 5.500 5" fill="none" stroke="#fff" stroke-width="2.600" stroke-linejoin="miter"></path></svg>
<div class="ni" style="left: 33.5px; top: 308px; letter-spacing: -0.03px;">Increase Priority</div>
<svg style="left:14px;top:327px" width="16" height="16" viewBox="-2.500 -2 29 29"><rect x="1" y="1.500" width="22" height="22" rx="2.500" fill="url(#gbl)" stroke="#2458b4" stroke-width=".8"></rect><rect x="2" y="2.500" width="20" height="9" rx="2" fill="#6fb0f5" fill-opacity=".45"></rect><path d="M6.500 6.500l5.500 5 5.500-5M6.500 12.500l5.500 5 5.500-5" fill="none" stroke="#fff" stroke-width="2.600" stroke-linejoin="miter"></path></svg>
<div class="ni" style="left: 33.5px; top: 330px; letter-spacing: -0.14px;">Decrease Priority</div>
<div class="gh" style="top:359px"><div class="t" style="left: 27px; top: 7px; letter-spacing: 0.45px;">Category Operati...</div>
<div class="chev"><svg style="left:3px;top:3px" width="9" height="9" viewBox="0 0 9 9"><path d="M1.500 4.500l3-3 3 3M1.500 8.500l3-3 3 3" fill="none" stroke="#1c3a8a" stroke-width="1.300"></path></svg>
</div></div>
<svg style="left:9px;top:356px" width="27" height="27" viewBox="0 0 24 24"><path d="M1 4h7l2 2h8v5h-17z" fill="#f7e27a" stroke="#d0ac36" stroke-width=".7"></path><path d="M1 8h17l-3 12h-14z" fill="url(#gyl)" stroke="#d0ac36" stroke-width=".7"></path><rect x="10.500" y="11" width="11" height="12.500" fill="#eef2fb" stroke="#8a98c0" stroke-width=".8"></rect><path d="M12.500 15h7M12.500 17.500h7M12.500 20h5" stroke="#9ab0da" stroke-width=".8"></path><path d="M14 14l4-3" stroke="#555" stroke-width="1"></path><ellipse cx="19.500" cy="9.500" rx="3.800" ry="2.600" fill="#e03a2a" stroke="#a31c10" stroke-width=".6" transform="rotate(-25 19.500 9.500)"></ellipse></svg>
<div class="gb" style="top:384px;height:236px"></div>
<svg style="left:14px;top:394px" width="16" height="16" viewBox="0 0 24 24"><rect x="1.500" y="4.500" width="20" height="17" rx="1" fill="#ffffff" stroke="#2f4f8f" stroke-width="1.500"></rect><path d="M1.500 5.500a1.500 1.500 0 0 1 1.500-1.500h5l1 1h11a1.500 1.500 0 0 1 1.500 1.500v2h-20z" fill="#2f6fd6"></path><path d="M13 3.5h3.500v-3.500h3.500v3.500h3.500v3.500h-3.500v3.500h-3.500v-3.500h-3.500z" fill="#4cb84a" stroke="#1f6a22" stroke-width=".9"></path></svg>
<div class="ni" style="left: 33.5px; top: 397px; letter-spacing: -0.06px;">New Category</div>
<svg style="left:14px;top:416px" width="16" height="16" viewBox="0 0 24 24"><path d="M5 7v15M5 11.500h7M5 16.500h7M5 21.500h7" stroke="#1f4fa8" stroke-width="1.500" fill="none"></path><rect x="1.500" y="4.500" width="7.500" height="4" fill="#8fb7ea" stroke="#1f4fa8" stroke-width="1.200"></rect><rect x="12" y="9.500" width="7" height="4" fill="#8fb7ea" stroke="#1f4fa8" stroke-width="1.200"></rect><rect x="12" y="14.500" width="7" height="4" fill="#8fb7ea" stroke="#1f4fa8" stroke-width="1.200"></rect><rect x="12" y="19.500" width="7" height="4" fill="#8fb7ea" stroke="#1f4fa8" stroke-width="1.200"></rect><path d="M13.5 3.5h3.500v-3.500h3.500v3.500h3.500v3.500h-3.500v3.500h-3.500v-3.500h-3.500z" fill="#4cb84a" stroke="#1f6a22" stroke-width=".9"></path></svg>
<div class="ni" style="left: 33.5px; top: 419px; letter-spacing: -0.12px;">Add Sub Category</div>
<svg style="left:14px;top:438px" width="16" height="16" viewBox="0 0 24 24"><rect x="1.500" y="4.500" width="20" height="17" rx="1" fill="#ffffff" stroke="#2f4f8f" stroke-width="1.500"></rect><path d="M1.500 5.500a1.500 1.500 0 0 1 1.500-1.500h5l1 1h11a1.500 1.500 0 0 1 1.500 1.500v2h-20z" fill="#2f6fd6"></path><path d="M4 13h9M4 16h7M4 19h9" stroke="#5a6a94" stroke-width="1.200"></path><path d="M7 18.500l2-4 11-10.500 2.500 2.500-11 10.500z" fill="#ecc050" stroke="#8a6a1a" stroke-width=".8"></path><path d="M7 18.500l.9-2 1.200 1.200z" fill="#222"></path><circle cx="21.800" cy="3.800" r="2.600" fill="#e6402a"></circle></svg>
<div class="ni" style="left: 33.5px; top: 441px; letter-spacing: -0.05px;">Edit Category</div>
<svg style="left:14px;top:460px" width="16" height="16" viewBox="0 0 24 24"><rect x="1.500" y="4.500" width="20" height="17" rx="1" fill="#ffffff" stroke="#2f4f8f" stroke-width="1.500"></rect><path d="M1.500 5.500a1.500 1.500 0 0 1 1.500-1.500h5l1 1h11a1.500 1.500 0 0 1 1.500 1.500v2h-20z" fill="#2f6fd6"></path><path d="M13.500 12.500l10 10M23.500 12.500l-10 10" stroke="#e0402a" stroke-width="2.400" stroke-linecap="round"></path></svg>
<div class="ni" style="left: 33.5px; top: 463px; letter-spacing: -0.03px;">Delete Category</div>
<svg opacity=".8" style="left:14px;top:482px" width="16" height="16" viewBox="0 0 24 24"><rect x="1.500" y="4.500" width="20" height="17" rx="1" fill="#ffffff" stroke="#2f4f8f" stroke-width="1.500"></rect><path d="M1.500 5.500a1.500 1.500 0 0 1 1.500-1.500h5l1 1h11a1.500 1.500 0 0 1 1.500 1.500v2h-20z" fill="#2f6fd6"></path><path d="M12 9.500l5 5h-3v4h-4v-4h-3z" fill="#2f6fd6" stroke="#1c3f8a" stroke-width=".9"></path></svg>
<div class="ni d" style="left: 33.5px; top: 485px; letter-spacing: -0.11px;">Category Move Up</div>
<svg style="left:14px;top:504px" width="16" height="16" viewBox="0 0 24 24"><rect x="1.500" y="4.500" width="20" height="17" rx="1" fill="#ffffff" stroke="#2f4f8f" stroke-width="1.500"></rect><path d="M1.500 5.500a1.500 1.500 0 0 1 1.500-1.500h5l1 1h11a1.500 1.500 0 0 1 1.500 1.500v2h-20z" fill="#2f6fd6"></path><path d="M12 19.500l5-5h-3v-4h-4v4h-3z" fill="#2f6fd6" stroke="#1c3f8a" stroke-width=".9"></path></svg>
<div class="ni" style="left: 33.5px; top: 507px; letter-spacing: -0.1px;">Category Move Down</div>
<svg style="left:14px;top:526px" width="16" height="16" viewBox="0 0 24 24"><path d="M5 2.500l4.500 5.500h-2.500v13.500h-4v-13.500h-2.500z" fill="#5a8ae0" stroke="#1c3f8a" stroke-width="1"></path><rect x="11" y="3" width="3.5" height="2.600" fill="#3fae3a" stroke="#145a16" stroke-width=".9"></rect><rect x="11" y="7.5" width="6" height="2.600" fill="#3fae3a" stroke="#145a16" stroke-width=".9"></rect><rect x="11" y="12" width="8.5" height="2.600" fill="#3fae3a" stroke="#145a16" stroke-width=".9"></rect><rect x="11" y="16.5" width="11" height="2.600" fill="#3fae3a" stroke="#145a16" stroke-width=".9"></rect><rect x="11" y="21" width="13" height="2.600" fill="#3fae3a" stroke="#145a16" stroke-width=".9"></rect></svg>
<div class="ni" style="left: 33.5px; top: 529px; letter-spacing: -0.1px;">Sort Categories</div>
<svg opacity=".8" style="left:14px;top:548px" width="16" height="16" viewBox="0 0 24 24"><rect x="1.500" y="4.500" width="20" height="17" rx="1" fill="#ffffff" stroke="#2f4f8f" stroke-width="1.500"></rect><path d="M1.500 5.500a1.500 1.500 0 0 1 1.500-1.500h5l1 1h11a1.500 1.500 0 0 1 1.500 1.500v2h-20z" fill="#2f6fd6"></path><path d="M4.500 14l5-4.500v3h4.500v3h-4.500v3z" fill="#2f6fd6" stroke="#1c3f8a" stroke-width=".9"></path></svg>
<div class="ni d" style="left: 33.5px; top: 551px; letter-spacing: 0.07px;">Category Outdent</div>
<svg opacity=".8" style="left:14px;top:570px" width="16" height="16" viewBox="0 0 24 24"><rect x="1.500" y="4.500" width="20" height="17" rx="1" fill="#ffffff" stroke="#2f4f8f" stroke-width="1.500"></rect><path d="M1.500 5.500a1.500 1.500 0 0 1 1.500-1.500h5l1 1h11a1.500 1.500 0 0 1 1.500 1.500v2h-20z" fill="#2f6fd6"></path><path d="M19.500 14l-5-4.500v3h-4.500v3h4.500v3z" fill="#2f6fd6" stroke="#1c3f8a" stroke-width=".9"></path></svg>
<div class="ni d" style="left: 33.5px; top: 573px; letter-spacing: 0.11px;">Category Indent</div>
<div class="ni" style="left:33.500px;top:595px">Set Filter by 'lesson prepa...</div>
</div>
<div class="a" style="left:183px;top:110px;width:2px;height:863px;background:linear-gradient(to right,#c9dbf6,#f4f8fd)"></div>
<div class="a" id="gridbox">
<div class="a" id="gby"><div class="t" style="left: 8px; top: 13px; letter-spacing: -0.08px;">Drag a column header here to group by that column</div>
</div>
<div class="a" id="ghead">
<div class="hc" style="left:0px;width:11px"><svg style="left:2px;top:4px" width="7" height="9" viewBox="0 0 7 9"><path d="M0 .5h1M2 .5h5M0 2.500h1M2 2.500h5M0 4.500h1M2 4.500h5M0 6.500h1M2 6.500h5M0 8.500h1M2 8.500h5" stroke="#000" stroke-width="1"></path></svg>
</div>
<div class="hc" style="left:11px;width:55px"><div class="t" style="left: 15px; top: 3px; letter-spacing: -0.32px;">Done</div>
</div>
<div class="hc" style="left:66px;width:256px"><div class="t" style="left: 105px; top: 3px; letter-spacing: -0.59px;">Name</div>
<div class="fb" style="left:240px;top:3px"><svg style="left:2px;top:2px" width="9" height="7" viewBox="0 0 9 7"><path d="M1 1l3.500 3.500 3.500-3.500" fill="none" stroke="#3f5688" stroke-width="2.200"></path></svg>
</div></div>
<div class="hc" style="left:322px;width:128px"><div class="t" style="left: 41px; top: 3px; letter-spacing: 0.04px;">Category</div>
</div>
<div class="hc" style="left:450px;width:104px"><div class="t" style="left: 26px; top: 3px; letter-spacing: -0.03px;">Priority</div>
<div class="fb" style="left:88px;top:3px"><svg style="left:2px;top:2px" width="9" height="7" viewBox="0 0 9 7"><path d="M1 1l3.500 3.500 3.500-3.500" fill="none" stroke="#3f5688" stroke-width="2.200"></path></svg>
</div></div>
<div class="hc" style="left:554px;width:48px"><div class="t" style="left:-1px;top:3px;">Complete</div>
</div>
<div class="hc" style="left:602px;width:102px"><div class="t" style="left: 14px; top: 3px; letter-spacing: -0.22px;">Due Date&amp;Time</div>
</div>
<div class="hc" style="left:704px;width:101px"><div class="t" style="left: 20px; top: 3px; letter-spacing: -0.14px;">Left Time</div>
<div class="fb" style="left:85px;top:3px"><svg style="left:2px;top:2px" width="9" height="7" viewBox="0 0 9 7"><path d="M1 1l3.500 3.500 3.500-3.500" fill="none" stroke="#3f5688" stroke-width="2.200"></path></svg>
</div></div>
<div class="hc" style="left:805px;width:127px"><div class="t" style="left: 32px; top: 3px; letter-spacing: 0.02px;">Hyperlink</div>
<div class="fb" style="left:111px;top:3px"><svg style="left:2px;top:2px" width="9" height="7" viewBox="0 0 9 7"><path d="M1 1l3.500 3.500 3.500-3.500" fill="none" stroke="#3f5688" stroke-width="2.200"></path></svg>
</div></div>
</div>
<div class="row" style="top:55px;height:22px"><div class="ind"></div><div class="vl" style="left:66px"></div><div class="vl" style="left:322px"></div><div class="vl" style="left:450px"></div><div class="vl" style="left:554px"></div><div class="vl" style="left:602px"></div><div class="vl" style="left:704px"></div><div class="vl" style="left:805px"></div><div class="vl" style="left:931px"></div><div class="ck"></div><div class="t" style="left:68px;top:3px;">role play 'To be a teacher'</div>
<svg style="left:325px;top:2px" width="16" height="16" viewBox="0 0 16 16"><rect x="2.500" y="5" width="13" height="9.500" fill="#e9fbff" stroke="#2a6f9e" stroke-width="1"></rect><path d="M2.500 8.200h13M2.500 11.300h13M6.800 5v9.500M11.200 5v9.500" stroke="#2a6f9e" stroke-width=".9"></path><path d="M10.500 11l3.500-5 1.500 1.100-3.500 5-2 .8z" fill="#4cae48" stroke="#2c7a2e" stroke-width=".5"></path><circle cx="15.200" cy="6.500" r="1" fill="#d93a2a"></circle><circle cx="5.200" cy="4.300" r="3.600" fill="#f4eef2" stroke="#d9566e" stroke-width="1.200"></circle><circle cx="5.200" cy="4.300" r="1.200" fill="#2a7a6a"></circle></svg>
<div class="t" style="left: 346px; top: 3px; letter-spacing: -0.33px;">lesson plan</div>
<svg style="left:454px;top:2px" width="16" height="16" viewBox="0 0 16 16"><circle cx="8" cy="8" r="7.300" fill="url(#gor)" stroke="#b8610f" stroke-width=".8"></circle><circle cx="8" cy="8" r="2.900" fill="#fff5e6"></circle></svg>
<div class="t" style="left: 473px; top: 3px; letter-spacing: -0.41px;">Normal</div>
<div class="t" style="left: 567.5px; top: 5px; letter-spacing: 0.34px;">0 %</div>
</div>
<div class="row" style="top:77px;height:18px"><div class="ind"></div><div class="t pv" style="left: 32px; top: 3px; letter-spacing: -0.06px;">students change place with teacher and teach other students using role cards</div>
<div class="vl" style="left:931px"></div></div>
<div class="row" style="top:95px;height:22px"><div class="ind"></div><div class="vl" style="left:66px"></div><div class="vl" style="left:322px"></div><div class="vl" style="left:450px"></div><div class="vl" style="left:554px"></div><div class="vl" style="left:602px"></div><div class="vl" style="left:704px"></div><div class="vl" style="left:805px"></div><div class="vl" style="left:931px"></div><div class="ck"></div><div class="t" style="left: 68px; top: 3px; letter-spacing: 0.03px;">do exercises 6, 7, 10 p.154-155</div>
<svg style="left:325px;top:2px" width="16" height="16" viewBox="0 0 16 16"><rect x="2.500" y="5" width="13" height="9.500" fill="#e9fbff" stroke="#2a6f9e" stroke-width="1"></rect><path d="M2.500 8.200h13M2.500 11.300h13M6.800 5v9.500M11.200 5v9.500" stroke="#2a6f9e" stroke-width=".9"></path><path d="M10.500 11l3.500-5 1.500 1.100-3.500 5-2 .8z" fill="#4cae48" stroke="#2c7a2e" stroke-width=".5"></path><circle cx="15.200" cy="6.500" r="1" fill="#d93a2a"></circle><circle cx="5.200" cy="4.300" r="3.600" fill="#f4eef2" stroke="#d9566e" stroke-width="1.200"></circle><circle cx="5.200" cy="4.300" r="1.200" fill="#2a7a6a"></circle></svg>
<div class="t" style="left: 346px; top: 3px; letter-spacing: -0.33px;">lesson plan</div>
<svg style="left:454px;top:2px" width="16" height="16" viewBox="0 0 16 16"><rect x="1.500" y="1.500" width="13" height="13" rx="1.500" fill="url(#grd)" stroke="#a3260f" stroke-width="1"></rect><path d="M4.500 8l3.500-3 3.500 3M4.500 12l3.500-3 3.500 3" fill="none" stroke="#fff" stroke-width="1.600"></path></svg>
<div class="t" style="left: 473px; top: 3px; letter-spacing: -0.33px;">Highest</div>
<div class="t" style="left: 567.5px; top: 5px; letter-spacing: 0.34px;">0 %</div>
</div>
<div class="row" style="top:117px;height:22px"><div class="ind"></div><div class="vl" style="left:66px"></div><div class="vl" style="left:322px"></div><div class="vl" style="left:450px"></div><div class="vl" style="left:554px"></div><div class="vl" style="left:602px"></div><div class="vl" style="left:704px"></div><div class="vl" style="left:805px"></div><div class="vl" style="left:931px"></div><div class="ck"></div><div class="t" style="left:68px;top:3px;">look through exercises 6, 7, 10 p.154-155</div>
<svg style="left:325px;top:2px" width="16" height="16" viewBox="0 0 16 16"><path d="M1 4.500l2.500-1 4.500 2.500 4-3.500 3 2.500.5 5-3 3.500-5.500 1-4.500-3z" fill="#fbe9d6" stroke="#d99a5e" stroke-width=".9" stroke-linejoin="round"></path><path d="M3 5l4.500 2 .8 6-4-2z" fill="#dff0fb" stroke="#c9b08a" stroke-width=".4"></path><path d="M8.300 7l4-3 1.500 6.500-4.700 2.500z" fill="#ffffff" stroke="#c9b08a" stroke-width=".4"></path><path d="M7 6.500l1.800.5.700 6.200-1.800-.4z" fill="#7aa6e6" stroke="#4a76c0" stroke-width=".4"></path></svg>
<div class="t" style="left: 346px; top: 3px; letter-spacing: -0.14px;">lesson preparation</div>
<svg style="left:454px;top:2px" width="16" height="16" viewBox="0 0 16 16"><circle cx="8" cy="8" r="7.300" fill="url(#gor)" stroke="#b8610f" stroke-width=".8"></circle><circle cx="8" cy="8" r="2.900" fill="#fff5e6"></circle></svg>
<div class="t" style="left: 473px; top: 3px; letter-spacing: -0.41px;">Normal</div>
<div class="t" style="left: 567.5px; top: 5px; letter-spacing: 0.34px;">0 %</div>
</div>
<div class="row" style="top:139px;height:22px"><div class="ind"></div><div class="vl" style="left:66px"></div><div class="vl" style="left:322px"></div><div class="vl" style="left:450px"></div><div class="vl" style="left:554px"></div><div class="vl" style="left:602px"></div><div class="vl" style="left:704px"></div><div class="vl" style="left:805px"></div><div class="vl" style="left:931px"></div><div class="ck"></div><div class="t" style="left:68px;top:3px;">give Unit 12 test</div>
<svg style="left:325px;top:2px" width="16" height="16" viewBox="0 0 16 16"><rect x="2.500" y="5" width="13" height="9.500" fill="#e9fbff" stroke="#2a6f9e" stroke-width="1"></rect><path d="M2.500 8.200h13M2.500 11.300h13M6.800 5v9.500M11.200 5v9.500" stroke="#2a6f9e" stroke-width=".9"></path><path d="M10.500 11l3.500-5 1.500 1.100-3.500 5-2 .8z" fill="#4cae48" stroke="#2c7a2e" stroke-width=".5"></path><circle cx="15.200" cy="6.500" r="1" fill="#d93a2a"></circle><circle cx="5.200" cy="4.300" r="3.600" fill="#f4eef2" stroke="#d9566e" stroke-width="1.200"></circle><circle cx="5.200" cy="4.300" r="1.200" fill="#2a7a6a"></circle></svg>
<div class="t" style="left: 346px; top: 3px; letter-spacing: -0.33px;">lesson plan</div>
<svg style="left:454px;top:2px" width="16" height="16" viewBox="0 0 16 16"><rect x="1.500" y="1.500" width="13" height="13" rx="1.500" fill="url(#grd)" stroke="#a3260f" stroke-width="1"></rect><path d="M4.500 8l3.500-3 3.500 3M4.500 12l3.500-3 3.500 3" fill="none" stroke="#fff" stroke-width="1.600"></path></svg>
<div class="t" style="left: 473px; top: 3px; letter-spacing: -0.33px;">Highest</div>
<div class="t" style="left: 567.5px; top: 5px; letter-spacing: 0.34px;">0 %</div>
</div>
<div class="row" style="top:161px;height:22px"><div class="ind"></div><div class="vl" style="left:66px"></div><div class="vl" style="left:322px"></div><div class="vl" style="left:450px"></div><div class="vl" style="left:554px"></div><div class="vl" style="left:602px"></div><div class="vl" style="left:704px"></div><div class="vl" style="left:805px"></div><div class="vl" style="left:931px"></div><div class="ck"></div><div class="t" style="left: 68px; top: 3px; letter-spacing: 0.02px;">write down questions for Unit 12 test</div>
<svg style="left:325px;top:2px" width="16" height="16" viewBox="0 0 16 16"><path d="M1 4.500l2.500-1 4.500 2.500 4-3.500 3 2.500.5 5-3 3.500-5.500 1-4.500-3z" fill="#fbe9d6" stroke="#d99a5e" stroke-width=".9" stroke-linejoin="round"></path><path d="M3 5l4.500 2 .8 6-4-2z" fill="#dff0fb" stroke="#c9b08a" stroke-width=".4"></path><path d="M8.300 7l4-3 1.500 6.500-4.700 2.500z" fill="#ffffff" stroke="#c9b08a" stroke-width=".4"></path><path d="M7 6.500l1.800.5.700 6.200-1.800-.4z" fill="#7aa6e6" stroke="#4a76c0" stroke-width=".4"></path></svg>
<div class="t" style="left: 346px; top: 3px; letter-spacing: -0.14px;">lesson preparation</div>
<svg style="left:454px;top:2px" width="16" height="16" viewBox="0 0 16 16"><path d="M8 2.500l7.200 10.500h-14.400z" fill="#fbd23a" stroke="#d9a21c" stroke-width=".9" stroke-linejoin="round"></path><path d="M1 13h14" stroke="#b9741a" stroke-width="1"></path><path d="M8 5.500v4.500" stroke="#3a2a00" stroke-width="1.600"></path><circle cx="8" cy="11.500" r=".9" fill="#3a2a00"></circle></svg>
<div class="t" style="left: 473px; top: 3px; letter-spacing: 0.08px;">Urgent</div>
<div class="t" style="left: 567.5px; top: 5px; letter-spacing: 0.34px;">0 %</div>
</div>
<div class="row" style="top:183px;height:22px"><div class="ind"></div><div class="vl" style="left:66px"></div><div class="vl" style="left:322px"></div><div class="vl" style="left:450px"></div><div class="vl" style="left:554px"></div><div class="vl" style="left:602px"></div><div class="vl" style="left:704px"></div><div class="vl" style="left:805px"></div><div class="vl" style="left:931px"></div><div class="ck"></div><div class="t" style="left: 68px; top: 3px; letter-spacing: -0.17px;">check previous lesson homework</div>
<svg style="left:325px;top:2px" width="16" height="16" viewBox="0 0 16 16"><rect x="2.500" y="5" width="13" height="9.500" fill="#e9fbff" stroke="#2a6f9e" stroke-width="1"></rect><path d="M2.500 8.200h13M2.500 11.300h13M6.800 5v9.500M11.200 5v9.500" stroke="#2a6f9e" stroke-width=".9"></path><path d="M10.500 11l3.500-5 1.500 1.100-3.500 5-2 .8z" fill="#4cae48" stroke="#2c7a2e" stroke-width=".5"></path><circle cx="15.200" cy="6.500" r="1" fill="#d93a2a"></circle><circle cx="5.200" cy="4.300" r="3.600" fill="#f4eef2" stroke="#d9566e" stroke-width="1.200"></circle><circle cx="5.200" cy="4.300" r="1.200" fill="#2a7a6a"></circle></svg>
<div class="t" style="left: 346px; top: 3px; letter-spacing: -0.33px;">lesson plan</div>
<svg style="left:454px;top:2px" width="16" height="16" viewBox="0 0 16 16"><rect x="1.500" y="1.500" width="13" height="13" rx="1.500" fill="url(#ggr)" stroke="#2a8a24" stroke-width="1"></rect><path d="M4.500 6.500l3.500 3.500 3.500-3.500" fill="none" stroke="#fff" stroke-width="1.600"></path></svg>
<div class="t" style="left: 473px; top: 3px; letter-spacing: -0.4px;">Low</div>
<div class="t" style="left: 567.5px; top: 5px; letter-spacing: 0.34px;">0 %</div>
</div>
<div class="row" style="top:205px;height:22px"><div class="ind"></div><div class="vl" style="left:66px"></div><div class="vl" style="left:322px"></div><div class="vl" style="left:450px"></div><div class="vl" style="left:554px"></div><div class="vl" style="left:602px"></div><div class="vl" style="left:704px"></div><div class="vl" style="left:805px"></div><div class="vl" style="left:931px"></div><div class="ck"></div><div class="t" style="left: 68px; top: 3px; letter-spacing: -0.05px;">give homework for next lesson</div>
<svg style="left:325px;top:2px" width="16" height="16" viewBox="0 0 16 16"><rect x="2.500" y="5" width="13" height="9.500" fill="#e9fbff" stroke="#2a6f9e" stroke-width="1"></rect><path d="M2.500 8.200h13M2.500 11.300h13M6.800 5v9.500M11.200 5v9.500" stroke="#2a6f9e" stroke-width=".9"></path><path d="M10.500 11l3.500-5 1.500 1.100-3.500 5-2 .8z" fill="#4cae48" stroke="#2c7a2e" stroke-width=".5"></path><circle cx="15.200" cy="6.500" r="1" fill="#d93a2a"></circle><circle cx="5.200" cy="4.300" r="3.600" fill="#f4eef2" stroke="#d9566e" stroke-width="1.200"></circle><circle cx="5.200" cy="4.300" r="1.200" fill="#2a7a6a"></circle></svg>
<div class="t" style="left: 346px; top: 3px; letter-spacing: -0.33px;">lesson plan</div>
<svg style="left:454px;top:2px" width="16" height="16" viewBox="0 0 16 16"><rect x="1.500" y="1.500" width="13" height="13" rx="1.500" fill="url(#grd)" stroke="#a3260f" stroke-width="1"></rect><path d="M4.500 8l3.500-3 3.500 3M4.500 12l3.500-3 3.500 3" fill="none" stroke="#fff" stroke-width="1.600"></path></svg>
<div class="t" style="left: 473px; top: 3px; letter-spacing: -0.33px;">Highest</div>
<div class="t" style="left: 567.5px; top: 5px; letter-spacing: 0.34px;">0 %</div>
</div>
<div class="row" style="top:227px;height:22px"><div class="ind"></div><div class="vl" style="left:66px"></div><div class="vl" style="left:322px"></div><div class="vl" style="left:450px"></div><div class="vl" style="left:554px"></div><div class="vl" style="left:602px"></div><div class="vl" style="left:704px"></div><div class="vl" style="left:805px"></div><div class="vl" style="left:931px"></div><div class="ck"></div><div class="t" style="left: 68px; top: 3px; letter-spacing: -0.12px;">choose exercises for new homework</div>
<svg style="left:325px;top:2px" width="16" height="16" viewBox="0 0 16 16"><path d="M1 4.500l2.500-1 4.500 2.500 4-3.500 3 2.500.5 5-3 3.500-5.500 1-4.500-3z" fill="#fbe9d6" stroke="#d99a5e" stroke-width=".9" stroke-linejoin="round"></path><path d="M3 5l4.500 2 .8 6-4-2z" fill="#dff0fb" stroke="#c9b08a" stroke-width=".4"></path><path d="M8.300 7l4-3 1.500 6.500-4.700 2.500z" fill="#ffffff" stroke="#c9b08a" stroke-width=".4"></path><path d="M7 6.500l1.800.5.700 6.200-1.800-.4z" fill="#7aa6e6" stroke="#4a76c0" stroke-width=".4"></path></svg>
<div class="t" style="left: 346px; top: 3px; letter-spacing: -0.14px;">lesson preparation</div>
<svg style="left:454px;top:2px" width="16" height="16" viewBox="0 0 16 16"><circle cx="8" cy="8" r="7.300" fill="url(#gor)" stroke="#b8610f" stroke-width=".8"></circle><circle cx="8" cy="8" r="2.900" fill="#fff5e6"></circle></svg>
<div class="t" style="left: 473px; top: 3px; letter-spacing: -0.41px;">Normal</div>
<div class="t" style="left: 567.5px; top: 5px; letter-spacing: 0.34px;">0 %</div>
</div>
<div class="row" style="top:249px;height:22px"><div class="ind"></div><div class="vl" style="left:66px"></div><div class="vl" style="left:322px"></div><div class="vl" style="left:450px"></div><div class="vl" style="left:554px"></div><div class="vl" style="left:602px"></div><div class="vl" style="left:704px"></div><div class="vl" style="left:805px"></div><div class="vl" style="left:931px"></div><div class="ck"></div><div class="t" style="left: 68px; top: 3px; letter-spacing: 0.04px;">read text 'At school' p.152</div>
<svg style="left:325px;top:2px" width="16" height="16" viewBox="0 0 16 16"><rect x="2.500" y="5" width="13" height="9.500" fill="#e9fbff" stroke="#2a6f9e" stroke-width="1"></rect><path d="M2.500 8.200h13M2.500 11.300h13M6.800 5v9.500M11.200 5v9.500" stroke="#2a6f9e" stroke-width=".9"></path><path d="M10.500 11l3.500-5 1.500 1.100-3.500 5-2 .8z" fill="#4cae48" stroke="#2c7a2e" stroke-width=".5"></path><circle cx="15.200" cy="6.500" r="1" fill="#d93a2a"></circle><circle cx="5.200" cy="4.300" r="3.600" fill="#f4eef2" stroke="#d9566e" stroke-width="1.200"></circle><circle cx="5.200" cy="4.300" r="1.200" fill="#2a7a6a"></circle></svg>
<div class="t" style="left: 346px; top: 3px; letter-spacing: -0.33px;">lesson plan</div>
<svg style="left:454px;top:2px" width="16" height="16" viewBox="0 0 16 16"><circle cx="8" cy="8" r="7.300" fill="url(#gor)" stroke="#b8610f" stroke-width=".8"></circle><circle cx="8" cy="8" r="2.900" fill="#fff5e6"></circle></svg>
<div class="t" style="left: 473px; top: 3px; letter-spacing: -0.41px;">Normal</div>
<div class="t" style="left: 567.5px; top: 5px; letter-spacing: 0.34px;">0 %</div>
</div>
<div class="row" style="top:271px;height:22px"><div class="ind"></div><div class="vl" style="left:66px"></div><div class="vl" style="left:322px"></div><div class="vl" style="left:450px"></div><div class="vl" style="left:554px"></div><div class="vl" style="left:602px"></div><div class="vl" style="left:704px"></div><div class="vl" style="left:805px"></div><div class="vl" style="left:931px"></div><div class="ck"></div><div class="t" style="left: 68px; top: 3px; letter-spacing: 0.02px;">look through text 'At school' p.152</div>
<svg style="left:325px;top:2px" width="16" height="16" viewBox="0 0 16 16"><path d="M1 4.500l2.500-1 4.500 2.500 4-3.500 3 2.500.5 5-3 3.500-5.500 1-4.500-3z" fill="#fbe9d6" stroke="#d99a5e" stroke-width=".9" stroke-linejoin="round"></path><path d="M3 5l4.500 2 .8 6-4-2z" fill="#dff0fb" stroke="#c9b08a" stroke-width=".4"></path><path d="M8.300 7l4-3 1.500 6.500-4.700 2.500z" fill="#ffffff" stroke="#c9b08a" stroke-width=".4"></path><path d="M7 6.500l1.800.5.700 6.200-1.800-.4z" fill="#7aa6e6" stroke="#4a76c0" stroke-width=".4"></path></svg>
<div class="t" style="left: 346px; top: 3px; letter-spacing: -0.14px;">lesson preparation</div>
<svg style="left:454px;top:2px" width="16" height="16" viewBox="0 0 16 16"><circle cx="8" cy="8" r="7.300" fill="url(#gor)" stroke="#b8610f" stroke-width=".8"></circle><circle cx="8" cy="8" r="2.900" fill="#fff5e6"></circle></svg>
<div class="t" style="left: 473px; top: 3px; letter-spacing: -0.41px;">Normal</div>
<div class="t" style="left: 567.5px; top: 5px; letter-spacing: 0.34px;">0 %</div>
</div>
<div class="row" style="top:293px;height:22px"><div class="ind"></div><div class="vl" style="left:66px"></div><div class="vl" style="left:322px"></div><div class="vl" style="left:450px"></div><div class="vl" style="left:554px"></div><div class="vl" style="left:602px"></div><div class="vl" style="left:704px"></div><div class="vl" style="left:805px"></div><div class="vl" style="left:931px"></div><div class="ck"></div><div class="t" style="left: 68px; top: 3px; letter-spacing: -0.07px;">speak about 'Teacher profession'</div>
<svg style="left:325px;top:2px" width="16" height="16" viewBox="0 0 16 16"><rect x="2.500" y="5" width="13" height="9.500" fill="#e9fbff" stroke="#2a6f9e" stroke-width="1"></rect><path d="M2.500 8.200h13M2.500 11.300h13M6.800 5v9.500M11.200 5v9.500" stroke="#2a6f9e" stroke-width=".9"></path><path d="M10.500 11l3.500-5 1.500 1.100-3.500 5-2 .8z" fill="#4cae48" stroke="#2c7a2e" stroke-width=".5"></path><circle cx="15.200" cy="6.500" r="1" fill="#d93a2a"></circle><circle cx="5.200" cy="4.300" r="3.600" fill="#f4eef2" stroke="#d9566e" stroke-width="1.200"></circle><circle cx="5.200" cy="4.300" r="1.200" fill="#2a7a6a"></circle></svg>
<div class="t" style="left: 346px; top: 3px; letter-spacing: -0.33px;">lesson plan</div>
<svg style="left:454px;top:2px" width="16" height="16" viewBox="0 0 16 16"><circle cx="8" cy="8" r="7.300" fill="url(#gor)" stroke="#b8610f" stroke-width=".8"></circle><circle cx="8" cy="8" r="2.900" fill="#fff5e6"></circle></svg>
<div class="t" style="left: 473px; top: 3px; letter-spacing: -0.41px;">Normal</div>
<div class="t" style="left: 567.5px; top: 5px; letter-spacing: 0.34px;">0 %</div>
</div>
<div class="row" style="top:315px;height:18px"><div class="ind"></div><div class="t pv" style="left:32px;top:3px;">how to be a good teacher, positive - negative characteristics</div>
<div class="vl" style="left:931px"></div></div>
<div class="row" style="top:333px;height:22px"><div class="ind"></div><div class="vl" style="left:66px"></div><div class="vl" style="left:322px"></div><div class="vl" style="left:450px"></div><div class="vl" style="left:554px"></div><div class="vl" style="left:602px"></div><div class="vl" style="left:704px"></div><div class="vl" style="left:805px"></div><div class="vl" style="left:931px"></div><div class="ck"></div><div class="t" style="left: 68px; top: 3px; letter-spacing: -0.09px;">listen to dialogue 3 Unit 13</div>
<svg style="left:325px;top:2px" width="16" height="16" viewBox="0 0 16 16"><rect x="2.500" y="5" width="13" height="9.500" fill="#e9fbff" stroke="#2a6f9e" stroke-width="1"></rect><path d="M2.500 8.200h13M2.500 11.300h13M6.800 5v9.500M11.200 5v9.500" stroke="#2a6f9e" stroke-width=".9"></path><path d="M10.500 11l3.500-5 1.500 1.100-3.500 5-2 .8z" fill="#4cae48" stroke="#2c7a2e" stroke-width=".5"></path><circle cx="15.200" cy="6.500" r="1" fill="#d93a2a"></circle><circle cx="5.200" cy="4.300" r="3.600" fill="#f4eef2" stroke="#d9566e" stroke-width="1.200"></circle><circle cx="5.200" cy="4.300" r="1.200" fill="#2a7a6a"></circle></svg>
<div class="t" style="left: 346px; top: 3px; letter-spacing: -0.33px;">lesson plan</div>
<svg style="left:454px;top:2px" width="16" height="16" viewBox="0 0 16 16"><circle cx="8" cy="8" r="7.300" fill="url(#gor)" stroke="#b8610f" stroke-width=".8"></circle><circle cx="8" cy="8" r="2.900" fill="#fff5e6"></circle></svg>
<div class="t" style="left: 473px; top: 3px; letter-spacing: -0.41px;">Normal</div>
<div class="t" style="left: 567.5px; top: 5px; letter-spacing: 0.34px;">0 %</div>
</div>
<div class="row" style="top:355px;height:22px"><div class="ind"></div><div class="vl" style="left:66px"></div><div class="vl" style="left:322px"></div><div class="vl" style="left:450px"></div><div class="vl" style="left:554px"></div><div class="vl" style="left:602px"></div><div class="vl" style="left:704px"></div><div class="vl" style="left:805px"></div><div class="vl" style="left:931px"></div><div class="ck"></div><div class="t" style="left: 68px; top: 3px; letter-spacing: 0.06px;">retell the text 'At school' p.152</div>
<svg style="left:325px;top:2px" width="16" height="16" viewBox="0 0 16 16"><rect x="2.500" y="5" width="13" height="9.500" fill="#e9fbff" stroke="#2a6f9e" stroke-width="1"></rect><path d="M2.500 8.200h13M2.500 11.300h13M6.800 5v9.500M11.200 5v9.500" stroke="#2a6f9e" stroke-width=".9"></path><path d="M10.500 11l3.500-5 1.500 1.100-3.500 5-2 .8z" fill="#4cae48" stroke="#2c7a2e" stroke-width=".5"></path><circle cx="15.200" cy="6.500" r="1" fill="#d93a2a"></circle><circle cx="5.200" cy="4.300" r="3.600" fill="#f4eef2" stroke="#d9566e" stroke-width="1.200"></circle><circle cx="5.200" cy="4.300" r="1.200" fill="#2a7a6a"></circle></svg>
<div class="t" style="left: 346px; top: 3px; letter-spacing: -0.33px;">lesson plan</div>
<svg style="left:454px;top:2px" width="16" height="16" viewBox="0 0 16 16"><rect x="1.500" y="1.500" width="13" height="13" rx="1.500" fill="url(#grd)" stroke="#a3260f" stroke-width="1"></rect><path d="M4.500 10l3.500-3.500 3.500 3.500" fill="none" stroke="#fff" stroke-width="1.600"></path></svg>
<div class="t" style="left: 473px; top: 3px; letter-spacing: -0.41px;">High</div>
<div class="t" style="left: 567.5px; top: 5px; letter-spacing: 0.34px;">0 %</div>
</div>
<div class="row" style="top:377px;height:22px"><div class="ind"></div><div class="vl" style="left:66px"></div><div class="vl" style="left:322px"></div><div class="vl" style="left:450px"></div><div class="vl" style="left:554px"></div><div class="vl" style="left:602px"></div><div class="vl" style="left:704px"></div><div class="vl" style="left:805px"></div><div class="vl" style="left:931px"></div><div class="ck"></div><div class="t" style="left: 68px; top: 3px; letter-spacing: -0.13px;">work in pairs</div>
<svg style="left:325px;top:2px" width="16" height="16" viewBox="0 0 16 16"><rect x="2.500" y="5" width="13" height="9.500" fill="#e9fbff" stroke="#2a6f9e" stroke-width="1"></rect><path d="M2.500 8.200h13M2.500 11.300h13M6.800 5v9.500M11.200 5v9.500" stroke="#2a6f9e" stroke-width=".9"></path><path d="M10.500 11l3.500-5 1.500 1.100-3.500 5-2 .8z" fill="#4cae48" stroke="#2c7a2e" stroke-width=".5"></path><circle cx="15.200" cy="6.500" r="1" fill="#d93a2a"></circle><circle cx="5.200" cy="4.300" r="3.600" fill="#f4eef2" stroke="#d9566e" stroke-width="1.200"></circle><circle cx="5.200" cy="4.300" r="1.200" fill="#2a7a6a"></circle></svg>
<div class="t" style="left: 346px; top: 3px; letter-spacing: -0.33px;">lesson plan</div>
<svg style="left:454px;top:2px" width="16" height="16" viewBox="0 0 16 16"><circle cx="8" cy="8" r="7.300" fill="url(#gor)" stroke="#b8610f" stroke-width=".8"></circle><circle cx="8" cy="8" r="2.900" fill="#fff5e6"></circle></svg>
<div class="t" style="left: 473px; top: 3px; letter-spacing: -0.41px;">Normal</div>
<div class="t" style="left: 567.5px; top: 5px; letter-spacing: 0.34px;">0 %</div>
</div>
<div class="row" style="top:399px;height:22px"><div class="ind"></div><div class="vl" style="left:66px"></div><div class="vl" style="left:322px"></div><div class="vl" style="left:450px"></div><div class="vl" style="left:554px"></div><div class="vl" style="left:602px"></div><div class="vl" style="left:704px"></div><div class="vl" style="left:805px"></div><div class="vl" style="left:931px"></div><div class="ck"></div><div class="t" style="left: 68px; top: 3px; letter-spacing: -0.12px;">explain grammar rule Present Perfect</div>
<svg style="left:325px;top:2px" width="16" height="16" viewBox="0 0 16 16"><rect x="2.500" y="5" width="13" height="9.500" fill="#e9fbff" stroke="#2a6f9e" stroke-width="1"></rect><path d="M2.500 8.200h13M2.500 11.300h13M6.800 5v9.500M11.200 5v9.500" stroke="#2a6f9e" stroke-width=".9"></path><path d="M10.500 11l3.500-5 1.500 1.100-3.500 5-2 .8z" fill="#4cae48" stroke="#2c7a2e" stroke-width=".5"></path><circle cx="15.200" cy="6.500" r="1" fill="#d93a2a"></circle><circle cx="5.200" cy="4.300" r="3.600" fill="#f4eef2" stroke="#d9566e" stroke-width="1.200"></circle><circle cx="5.200" cy="4.300" r="1.200" fill="#2a7a6a"></circle></svg>
<div class="t" style="left: 346px; top: 3px; letter-spacing: -0.33px;">lesson plan</div>
<svg style="left:454px;top:2px" width="16" height="16" viewBox="0 0 16 16"><rect x="1.500" y="1.500" width="13" height="13" rx="1.500" fill="url(#grd)" stroke="#a3260f" stroke-width="1"></rect><path d="M4.500 10l3.500-3.500 3.500 3.500" fill="none" stroke="#fff" stroke-width="1.600"></path></svg>
<div class="t" style="left: 473px; top: 3px; letter-spacing: -0.41px;">High</div>
<div class="t" style="left: 567.5px; top: 5px; letter-spacing: 0.34px;">0 %</div>
</div>
<div class="row" style="top:421px;height:22px"><div class="ind"></div><div class="vl" style="left:66px"></div><div class="vl" style="left:322px"></div><div class="vl" style="left:450px"></div><div class="vl" style="left:554px"></div><div class="vl" style="left:602px"></div><div class="vl" style="left:704px"></div><div class="vl" style="left:805px"></div><div class="vl" style="left:931px"></div><div class="ck"></div><div class="t" style="left: 68px; top: 3px; letter-spacing: 0.07px;">write down new words from text p.152</div>
<svg style="left:325px;top:2px" width="16" height="16" viewBox="0 0 16 16"><rect x="2.500" y="5" width="13" height="9.500" fill="#e9fbff" stroke="#2a6f9e" stroke-width="1"></rect><path d="M2.500 8.200h13M2.500 11.300h13M6.800 5v9.500M11.200 5v9.500" stroke="#2a6f9e" stroke-width=".9"></path><path d="M10.500 11l3.500-5 1.500 1.100-3.500 5-2 .8z" fill="#4cae48" stroke="#2c7a2e" stroke-width=".5"></path><circle cx="15.200" cy="6.500" r="1" fill="#d93a2a"></circle><circle cx="5.200" cy="4.300" r="3.600" fill="#f4eef2" stroke="#d9566e" stroke-width="1.200"></circle><circle cx="5.200" cy="4.300" r="1.200" fill="#2a7a6a"></circle></svg>
<div class="t" style="left: 346px; top: 3px; letter-spacing: -0.33px;">lesson plan</div>
<svg style="left:454px;top:2px" width="16" height="16" viewBox="0 0 16 16"><circle cx="8" cy="8" r="7.300" fill="url(#gor)" stroke="#b8610f" stroke-width=".8"></circle><circle cx="8" cy="8" r="2.900" fill="#fff5e6"></circle></svg>
<div class="t" style="left: 473px; top: 3px; letter-spacing: -0.41px;">Normal</div>
<div class="t" style="left: 567.5px; top: 5px; letter-spacing: 0.34px;">0 %</div>
</div>
<div class="row" style="top:443px;height:22px"><div class="ind"></div><div class="vl" style="left:66px"></div><div class="vl" style="left:322px"></div><div class="vl" style="left:450px"></div><div class="vl" style="left:554px"></div><div class="vl" style="left:602px"></div><div class="vl" style="left:704px"></div><div class="vl" style="left:805px"></div><div class="vl" style="left:931px"></div><div class="ck"></div><div class="t" style="left:68px;top:3px;">discus the text 'At school' p.152</div>
<svg style="left:325px;top:2px" width="16" height="16" viewBox="0 0 16 16"><rect x="2.500" y="5" width="13" height="9.500" fill="#e9fbff" stroke="#2a6f9e" stroke-width="1"></rect><path d="M2.500 8.200h13M2.500 11.300h13M6.800 5v9.500M11.200 5v9.500" stroke="#2a6f9e" stroke-width=".9"></path><path d="M10.500 11l3.500-5 1.500 1.100-3.500 5-2 .8z" fill="#4cae48" stroke="#2c7a2e" stroke-width=".5"></path><circle cx="15.200" cy="6.500" r="1" fill="#d93a2a"></circle><circle cx="5.200" cy="4.300" r="3.600" fill="#f4eef2" stroke="#d9566e" stroke-width="1.200"></circle><circle cx="5.200" cy="4.300" r="1.200" fill="#2a7a6a"></circle></svg>
<div class="t" style="left: 346px; top: 3px; letter-spacing: -0.33px;">lesson plan</div>
<svg style="left:454px;top:2px" width="16" height="16" viewBox="0 0 16 16"><circle cx="8" cy="8" r="7.300" fill="url(#gor)" stroke="#b8610f" stroke-width=".8"></circle><circle cx="8" cy="8" r="2.900" fill="#fff5e6"></circle></svg>
<div class="t" style="left: 473px; top: 3px; letter-spacing: -0.41px;">Normal</div>
<div class="t" style="left: 567.5px; top: 5px; letter-spacing: 0.34px;">0 %</div>
</div>
<div class="row" style="top:465px;height:22px"><div class="ind"></div><div class="vl" style="left:66px"></div><div class="vl" style="left:322px"></div><div class="vl" style="left:450px"></div><div class="vl" style="left:554px"></div><div class="vl" style="left:602px"></div><div class="vl" style="left:704px"></div><div class="vl" style="left:805px"></div><div class="vl" style="left:931px"></div><div class="ck"></div><div class="t" style="left: 68px; top: 3px; letter-spacing: 0.07px;">take tapes for tape recorder</div>
<svg style="left:325px;top:2px" width="16" height="16" viewBox="0 0 16 16"><path d="M1 4.500l2.500-1 4.500 2.500 4-3.500 3 2.500.5 5-3 3.500-5.500 1-4.500-3z" fill="#fbe9d6" stroke="#d99a5e" stroke-width=".9" stroke-linejoin="round"></path><path d="M3 5l4.500 2 .8 6-4-2z" fill="#dff0fb" stroke="#c9b08a" stroke-width=".4"></path><path d="M8.300 7l4-3 1.500 6.500-4.700 2.500z" fill="#ffffff" stroke="#c9b08a" stroke-width=".4"></path><path d="M7 6.500l1.800.5.700 6.200-1.800-.4z" fill="#7aa6e6" stroke="#4a76c0" stroke-width=".4"></path></svg>
<div class="t" style="left: 346px; top: 3px; letter-spacing: -0.14px;">lesson preparation</div>
<svg style="left:454px;top:2px" width="16" height="16" viewBox="0 0 16 16"><path d="M8 2.500l7.200 10.500h-14.400z" fill="#fbd23a" stroke="#d9a21c" stroke-width=".9" stroke-linejoin="round"></path><path d="M1 13h14" stroke="#b9741a" stroke-width="1"></path><path d="M8 5.500v4.500" stroke="#3a2a00" stroke-width="1.600"></path><circle cx="8" cy="11.500" r=".9" fill="#3a2a00"></circle></svg>
<div class="t" style="left: 473px; top: 3px; letter-spacing: 0.08px;">Urgent</div>
<div class="t" style="left: 567.5px; top: 5px; letter-spacing: 0.34px;">0 %</div>
</div>
<div class="row" style="top:487px;height:22px"><div class="ind"></div><div class="vl" style="left:66px"></div><div class="vl" style="left:322px"></div><div class="vl" style="left:450px"></div><div class="vl" style="left:554px"></div><div class="vl" style="left:602px"></div><div class="vl" style="left:704px"></div><div class="vl" style="left:805px"></div><div class="vl" style="left:931px"></div><div class="ck"></div><div class="t" style="left: 68px; top: 3px; letter-spacing: -0.06px;">prepare cards with roles</div>
<svg style="left:325px;top:2px" width="16" height="16" viewBox="0 0 16 16"><path d="M1 4.500l2.500-1 4.500 2.500 4-3.500 3 2.500.5 5-3 3.500-5.500 1-4.500-3z" fill="#fbe9d6" stroke="#d99a5e" stroke-width=".9" stroke-linejoin="round"></path><path d="M3 5l4.500 2 .8 6-4-2z" fill="#dff0fb" stroke="#c9b08a" stroke-width=".4"></path><path d="M8.300 7l4-3 1.500 6.500-4.700 2.500z" fill="#ffffff" stroke="#c9b08a" stroke-width=".4"></path><path d="M7 6.500l1.800.5.700 6.200-1.800-.4z" fill="#7aa6e6" stroke="#4a76c0" stroke-width=".4"></path></svg>
<div class="t" style="left: 346px; top: 3px; letter-spacing: -0.14px;">lesson preparation</div>
<svg style="left:454px;top:2px" width="16" height="16" viewBox="0 0 16 16"><rect x="1.500" y="1.500" width="13" height="13" rx="1.500" fill="url(#grd)" stroke="#a3260f" stroke-width="1"></rect><path d="M4.500 10l3.500-3.500 3.500 3.500" fill="none" stroke="#fff" stroke-width="1.600"></path></svg>
<div class="t" style="left: 473px; top: 3px; letter-spacing: -0.41px;">High</div>
<div class="t" style="left: 567.5px; top: 5px; letter-spacing: 0.34px;">0 %</div>
</div>
<div class="row" style="top:509px;height:22px"><div class="ind"></div><div class="vl" style="left:66px"></div><div class="vl" style="left:322px"></div><div class="vl" style="left:450px"></div><div class="vl" style="left:554px"></div><div class="vl" style="left:602px"></div><div class="vl" style="left:704px"></div><div class="vl" style="left:805px"></div><div class="vl" style="left:931px"></div><div class="ck"></div><div class="t" style="left: 68px; top: 3px; letter-spacing: -0.09px;">think of examples for grammar rule</div>
<svg style="left:325px;top:2px" width="16" height="16" viewBox="0 0 16 16"><path d="M1 4.500l2.500-1 4.500 2.500 4-3.500 3 2.500.5 5-3 3.500-5.500 1-4.500-3z" fill="#fbe9d6" stroke="#d99a5e" stroke-width=".9" stroke-linejoin="round"></path><path d="M3 5l4.500 2 .8 6-4-2z" fill="#dff0fb" stroke="#c9b08a" stroke-width=".4"></path><path d="M8.300 7l4-3 1.500 6.500-4.700 2.500z" fill="#ffffff" stroke="#c9b08a" stroke-width=".4"></path><path d="M7 6.500l1.800.5.700 6.200-1.800-.4z" fill="#7aa6e6" stroke="#4a76c0" stroke-width=".4"></path></svg>
<div class="t" style="left: 346px; top: 3px; letter-spacing: -0.14px;">lesson preparation</div>
<svg style="left:454px;top:2px" width="16" height="16" viewBox="0 0 16 16"><rect x="1.500" y="1.500" width="13" height="13" rx="1.500" fill="url(#ggr)" stroke="#2a8a24" stroke-width="1"></rect><path d="M4.500 4.500l3.500 3 3.500-3M4.500 8.500l3.500 3 3.500-3" fill="none" stroke="#fff" stroke-width="1.600"></path></svg>
<div class="t" style="left: 473px; top: 3px; letter-spacing: -0.31px;">Lowest</div>
<div class="t" style="left: 567.5px; top: 5px; letter-spacing: 0.34px;">0 %</div>
</div>
<svg style="left:3px;top:307px" width="6" height="10" viewBox="0 0 6 10"><path d="M0 0l5.500 5-5.500 5z" fill="#000"></path></svg>
<div class="a" id="gfoot"><div class="a" style="left:11px;top:0;width:1px;height:26px;background:#b5b2a6"></div><div class="a" id="cnt"><div class="t" style="left: 3px; top: 4px; letter-spacing: -0.12px;">20</div>
</div></div>
</div>
<div class="a" style="left:186px;top:753px;width:932px;height:2px;background:#f7f8fa"></div>
<div class="ph" style="left:187px;top:755px;width:930px;background:linear-gradient(to bottom,#dfe6f9,#d3dcf5);border-color:#c9d2ee"><div class="t" style="left: 2px; top: 4px; letter-spacing: 0.19px;">Note</div>
<div class="xb" style="left:911px;top:3px"><svg style="left:0px;top:0px" width="12" height="12" viewBox="0 0 12 12"><path d="M3 3l6 6M9 3l-6 6" stroke="#fff" stroke-width="2"></path></svg>
</div><svg style="left:895px;top:4px" width="13" height="13" viewBox="0 0 14 14"><path d="M4.800 2.200h4.400l1.300 5.300h-7z" fill="#cfe0fb" stroke="#1c3f8a" stroke-width="1.300" stroke-linejoin="round"></path><path d="M3 1.800h8M1.800 8h10.400M7 8.500v5" fill="none" stroke="#1c3f8a" stroke-width="1.700"></path><path d="M7.300 3v4" stroke="#4a7ad0" stroke-width="1.400"></path></svg>
</div>
<div class="a" id="ntb">
<div class="grip" style="left:5px;top:9px;height:24px"></div>
<svg style="left:14px;top:8px" width="24" height="24" viewBox="0 0 24 24"><path d="M12 1h8l3.500 3.500v13h-11.500z" fill="#fafaf8" stroke="#c4c3bc" stroke-width=".8"></path><rect x="1" y="10" width="13" height="13" fill="#b5b4ae" stroke="#9a9992" stroke-width=".8"></rect><rect x="3.500" y="10.500" width="8" height="5" fill="#eef0fb"></rect><rect x="4" y="18.500" width="7" height="4" fill="#dfe2f5"></rect><path d="M17 8l5 5h-2.500v5h-5.500l-2.500 2v-5h3v-2h-2.500z" fill="#c9c8c2" stroke="#9a9992" stroke-width=".7"></path></svg>
<div class="sep" style="left:46px;top:5px;height:30px"></div>
<div class="nb" style="left:55px;top:9px"><div class="t" style="left:0;top:1px;width:20px;text-align:center;font-family:'Liberation Serif',serif;font-weight:bold;font-size:18px;line-height:18px;height:18px;color:#5b9bd8">B</div></div>
<div class="nb" style="left:87px;top:9px"><div class="t" style="left:0;top:1px;width:20px;text-align:center;font-family:'Liberation Serif',serif;font-style:italic;font-weight:bold;font-size:18px;line-height:18px;height:18px;color:#7fb2e3">I</div></div>
<div class="nb" style="left:119px;top:9px"><div class="t" style="left:0;top:0;width:20px;text-align:center;font-family:'Liberation Serif',serif;font-size:17px;line-height:18px;height:18px;color:#5b9bd8">U</div><div class="a" style="left:3px;top:16px;width:14px;height:1px;background:#5b9bd8"></div></div>
<div class="sep" style="left:149px;top:5px;height:30px"></div>
<div class="cbx" style="left:153px;top:11px;width:92px;height:18px;border:0"><div class="t" style="left:2px;top:0;font-family:'Liberation Serif',serif;font-weight:bold;font-size:13px;line-height:14px;height:14px">T</div><div class="t" style="left:7px;top:4px;font-family:'Liberation Serif',serif;font-weight:bold;font-size:11px;line-height:12px;height:12px">T</div><div class="t" style="left: 16px; top: 3px; letter-spacing: -0.36px;">Tahoma</div>
<div class="cbtn" style="right:0;top:1px;width:13px;height:16px"><svg style="left:2px;top:5px" width="9" height="7" viewBox="0 0 9 7"><path d="M1 1l3.500 3.500 3.500-3.500" fill="none" stroke="#4d6185" stroke-width="2"></path></svg>
</div></div>
<div class="cbx" style="left:248px;top:11px;width:97px;height:18px;border:0"><div class="a" style="left:1px;top:2px;width:27px;height:14px;background:#000"></div><div class="t" style="left: 31px; top: 3px; letter-spacing: -0.38px;">Black</div>
<div class="cbtn" style="right:0;top:1px;width:13px;height:16px"><svg style="left:2px;top:5px" width="9" height="7" viewBox="0 0 9 7"><path d="M1 1l3.500 3.500 3.500-3.500" fill="none" stroke="#4d6185" stroke-width="2"></path></svg>
</div></div>
<div class="nb" style="left:352px;top:9px"><div class="t" style="left:2px;top:3px;font-size:14px;line-height:16px;height:16px;color:#5aa85a">A</div><svg style="left:13px;top:2px" width="7" height="16" viewBox="0 0 7 16"><path d="M3.500 15v-5.500M1 12l2.500-2.500 2.500 2.500" fill="none" stroke="#4a9a4a" stroke-width="1"></path><path d="M1 7l2.500-6 2.500 6M2 5h3" fill="none" stroke="#d9534f" stroke-width="1.100"></path></svg>
</div>
<div class="nb" style="left:384px;top:9px"><div class="t" style="left:2px;top:3px;font-size:14px;line-height:16px;height:16px;color:#5aa85a">A</div><svg style="left:13px;top:2px" width="7" height="16" viewBox="0 0 7 16"><path d="M3.500 1v5.500M1 4l2.500 2.500 2.500-2.500" fill="none" stroke="#4a9a4a" stroke-width="1"></path><path d="M1 15.500l2.500-6 2.500 6M2 13.500h3" fill="none" stroke="#d9534f" stroke-width="1.100"></path></svg>
</div>
<div class="sep" style="left:414px;top:5px;height:30px"></div>
<div class="pressed" style="position:absolute;left:418px;top:4px;width:32px;height:32px;border-radius:4px"></div>
<div class="nb p" style="left:424px;top:10px"><svg style="left:0px;top:0px" width="20" height="20" viewBox="0 0 20 20"><rect x="2" y="3" width="16" height="2" fill="#0f9a12"></rect><rect x="2" y="6" width="9" height="2" fill="#0f9a12"></rect><rect x="2" y="9" width="16" height="2" fill="#0f9a12"></rect><rect x="2" y="12" width="9" height="2" fill="#0f9a12"></rect><rect x="2" y="15" width="16" height="2" fill="#0f9a12"></rect><rect x="2" y="18" width="9" height="2" fill="#0f9a12"></rect></svg>
</div>
<div class="nb" style="left:455px;top:9px"><svg style="left:0px;top:0px" width="20" height="20" viewBox="0 0 20 20"><rect x="2.0" y="3" width="16" height="2" fill="#5fb05a"></rect><rect x="5.5" y="6" width="9" height="2" fill="#5fb05a"></rect><rect x="2.0" y="9" width="16" height="2" fill="#5fb05a"></rect><rect x="5.5" y="12" width="9" height="2" fill="#5fb05a"></rect><rect x="2.0" y="15" width="16" height="2" fill="#5fb05a"></rect><rect x="5.5" y="18" width="9" height="2" fill="#5fb05a"></rect></svg>
</div>
<div class="nb" style="left:487px;top:9px"><svg style="left:0px;top:0px" width="20" height="20" viewBox="0 0 20 20"><rect x="2" y="3" width="16" height="2" fill="#5fb05a"></rect><rect x="9" y="6" width="9" height="2" fill="#5fb05a"></rect><rect x="2" y="9" width="16" height="2" fill="#5fb05a"></rect><rect x="9" y="12" width="9" height="2" fill="#5fb05a"></rect><rect x="2" y="15" width="16" height="2" fill="#5fb05a"></rect><rect x="9" y="18" width="9" height="2" fill="#5fb05a"></rect></svg>
</div>
<svg style="left:519px;top:8px" width="22" height="24" viewBox="0 0 22 24"><circle cx="2.700" cy="3.5" r="2.500" fill="#5a6fb0"></circle><rect x="7" y="2" width="14" height="3" fill="#6aaa5a" stroke="#4a8a3c" stroke-width=".5"></rect><circle cx="2.700" cy="11.5" r="2.500" fill="#5a6fb0"></circle><rect x="7" y="10" width="14" height="3" fill="#6aaa5a" stroke="#4a8a3c" stroke-width=".5"></rect><circle cx="2.700" cy="19.5" r="2.500" fill="#5a6fb0"></circle><rect x="7" y="18" width="14" height="3" fill="#6aaa5a" stroke="#4a8a3c" stroke-width=".5"></rect></svg>
<svg style="left:548px;top:29px" width="6" height="4" viewBox="0 0 7 4"><path d="M0 0h7l-3.500 4z" fill="#000"></path></svg>
</div>
<div class="a" id="nbody"><div class="t" style="left: 2px; top: 3px; letter-spacing: 0.02px;">how to be a good teacher, positive - negative characteristics</div>
</div>
<div class="a" id="tabs"><div class="tab" style="left:5px;width:70px"><div class="t" style="left: 2px; top: 4px; letter-spacing: -0.14px;">Search result</div>
</div><div class="tab sel" style="left:75px;width:31px"><div class="t" style="left: 3px; top: 5px; letter-spacing: -0.06px;">Note</div>
</div></div>
<div class="ph" style="left:1121px;top:87px;width:157px;"><div class="t" style="left: 3px; top: 4px; letter-spacing: -0.17px;">Categories Bar</div>
<div class="xb" style="left:138px;top:3px"><svg style="left:0px;top:0px" width="12" height="12" viewBox="0 0 12 12"><path d="M3 3l6 6M9 3l-6 6" stroke="#fff" stroke-width="2"></path></svg>
</div><svg style="left:122px;top:4px" width="13" height="13" viewBox="0 0 14 14"><path d="M4.800 2.200h4.400l1.300 5.300h-7z" fill="#cfe0fb" stroke="#1c3f8a" stroke-width="1.300" stroke-linejoin="round"></path><path d="M3 1.800h8M1.800 8h10.400M7 8.500v5" fill="none" stroke="#1c3f8a" stroke-width="1.700"></path><path d="M7.300 3v4" stroke="#4a7ad0" stroke-width="1.400"></path></svg>
<div class="mb" style="left:106px;top:3px"><svg style="left:0px;top:0px" width="12" height="12" viewBox="0 0 12 12"><rect x="3" y="3" width="6" height="6" fill="none" stroke="#fff" stroke-width="1.500"></rect></svg>
</div></div>
<div class="a" id="ctree">
<div class="a" style="left:0;top:0;width:155px;height:18px;background:linear-gradient(to bottom,#ece9d8 0,#ece9d8 14px,#e0dccb 17px,#d6d2c2 18px)"></div>
<div class="a" style="left:86px;top:2px;width:1px;height:14px;background:#c9c6b6"></div><div class="a" style="left:87px;top:2px;width:1px;height:14px;background:#fff"></div><div class="a" style="left:116px;top:2px;width:1px;height:14px;background:#c9c6b6"></div><div class="a" style="left:117px;top:2px;width:1px;height:14px;background:#fff"></div><div class="a" style="left:153px;top:2px;width:1px;height:14px;background:#c9c6b6"></div>
<div class="t" style="left: 92px; top: 3px; letter-spacing: 0.22px;">U...</div>
<div class="t" style="left: 124px; top: 3px; letter-spacing: 0.15px;">Total</div>
<div class="a" style="left:88px;top:21px;width:66px;height:14px;background:#ece9d8"></div>
<div class="a" style="left:19px;top:19px;width:136px;height:18px;border:1px solid #000"></div>
<svg style="left:9px;top:28px" width="11" height="19" viewBox="0 0 11 19"><path d="M.5 0v18.500M.5 .5h10M.5 18.500h10" fill="none" stroke="#a9a9a0" stroke-width="1" stroke-dasharray="1 1"></path></svg>
<svg style="left:22px;top:20px" width="16" height="16" viewBox="0 0 16 16"><path d="M1 4.500l2.500-1 4.500 2.500 4-3.500 3 2.500.5 5-3 3.500-5.500 1-4.500-3z" fill="#fbe9d6" stroke="#d99a5e" stroke-width=".9" stroke-linejoin="round"></path><path d="M3 5l4.500 2 .8 6-4-2z" fill="#dff0fb" stroke="#c9b08a" stroke-width=".4"></path><path d="M8.300 7l4-3 1.500 6.500-4.700 2.500z" fill="#ffffff" stroke="#c9b08a" stroke-width=".4"></path><path d="M7 6.500l1.800.5.700 6.200-1.800-.4z" fill="#7aa6e6" stroke="#4a76c0" stroke-width=".4"></path></svg>
<div class="t" style="left:42px;top:22px;width:43px;overflow:hidden;letter-spacing:-.2px">lesson preparation</div>
<svg style="left:22px;top:38px" width="16" height="16" viewBox="0 0 16 16"><rect x="2.500" y="5" width="13" height="9.500" fill="#e9fbff" stroke="#2a6f9e" stroke-width="1"></rect><path d="M2.500 8.200h13M2.500 11.300h13M6.800 5v9.500M11.200 5v9.500" stroke="#2a6f9e" stroke-width=".9"></path><path d="M10.500 11l3.500-5 1.500 1.100-3.500 5-2 .8z" fill="#4cae48" stroke="#2c7a2e" stroke-width=".5"></path><circle cx="15.200" cy="6.500" r="1" fill="#d93a2a"></circle><circle cx="5.200" cy="4.300" r="3.600" fill="#f4eef2" stroke="#d9566e" stroke-width="1.200"></circle><circle cx="5.200" cy="4.300" r="1.200" fill="#2a7a6a"></circle></svg>
<div class="t" style="left:42px;top:40px;width:43px;overflow:hidden;letter-spacing:-.2px">lesson plan</div>
<div class="t" style="left:141px;top:22px;width:12px;text-align:right">7</div>
<div class="t" style="left:141px;top:40px;width:12px;text-align:right">13</div>
</div>
<div class="ph" style="left:1121px;top:532px;width:157px;"><div class="t" style="left: 3px; top: 4px; letter-spacing: 0.08px;">Filters Bar</div>
<div class="xb" style="left:138px;top:3px"><svg style="left:0px;top:0px" width="12" height="12" viewBox="0 0 12 12"><path d="M3 3l6 6M9 3l-6 6" stroke="#fff" stroke-width="2"></path></svg>
</div><svg style="left:122px;top:4px" width="13" height="13" viewBox="0 0 14 14"><path d="M4.800 2.200h4.400l1.300 5.300h-7z" fill="#cfe0fb" stroke="#1c3f8a" stroke-width="1.300" stroke-linejoin="round"></path><path d="M3 1.800h8M1.800 8h10.400M7 8.500v5" fill="none" stroke="#1c3f8a" stroke-width="1.700"></path><path d="M7.300 3v4" stroke="#4a7ad0" stroke-width="1.400"></path></svg>
<div class="mb" style="left:106px;top:3px"><svg style="left:0px;top:0px" width="12" height="12" viewBox="0 0 12 12"><rect x="3" y="3" width="6" height="6" fill="none" stroke="#fff" stroke-width="1.500"></rect></svg>
</div></div>
<div class="a" id="filt">
<div class="t" style="left: 10px; top: 8px; font-weight: bold; letter-spacing: 0.25px;">Filter By Done:</div>
<div class="cbx" style="left:8px;top:25px;width:121px;height:21px"><div class="t" style="left: 3px; top: 3px; letter-spacing: -0.08px;">All</div>
<div class="cbtn" style="right:1px;top:1px;width:15px;height:17px"><svg style="left:3px;top:5px" width="9" height="7" viewBox="0 0 9 7"><path d="M1 1l3.500 3.500 3.500-3.500" fill="none" stroke="#4d6185" stroke-width="2"></path></svg>
</div></div>
<div class="t" style="left: 10px; top: 56px; font-weight: bold; letter-spacing: 0.24px;">Filter By Due Date:</div>
<svg style="left:10px;top:81px" width="5" height="8" viewBox="0 0 5 8"><path d="M5 0v8l-4.500-4z" fill="#000"></path></svg>
<div class="t" style="left: 25px; top: 79px; letter-spacing: -0.04px;">Сентябрь</div>
<svg style="left:84px;top:81px" width="5" height="8" viewBox="0 0 5 8"><path d="M0 0v8l4.500-4z" fill="#000"></path></svg>
<svg style="left:99px;top:81px" width="5" height="8" viewBox="0 0 5 8"><path d="M5 0v8l-4.500-4z" fill="#000"></path></svg>
<div class="t" style="left: 111px; top: 79px; letter-spacing: -0.12px;">2005</div>
<svg style="left:144px;top:81px" width="5" height="8" viewBox="0 0 5 8"><path d="M0 0v8l4.500-4z" fill="#000"></path></svg>
<div class="a" style="left:5px;top:93px;width:148px;height:1px;background:#d0cdbd"></div>
<div class="t" style="left:19px;top:96px;width:18px;text-align:center">П</div>
<div class="t" style="left:37px;top:96px;width:18px;text-align:center">В</div>
<div class="t" style="left:55px;top:96px;width:18px;text-align:center">С</div>
<div class="t" style="left:73px;top:96px;width:18px;text-align:center">Ч</div>
<div class="t" style="left:91px;top:96px;width:18px;text-align:center">П</div>
<div class="t" style="left:109px;top:96px;width:18px;text-align:center">С</div>
<div class="t" style="left:127px;top:96px;width:18px;text-align:center">В</div>
<div class="a" style="left:17px;top:109px;width:126px;height:1px;background:#aca899"></div>
<div class="t" style="left:14px;top:113px;width:18px;text-align:right;color:#aca899;">29</div>
<div class="t" style="left:32px;top:113px;width:18px;text-align:right;color:#aca899;">30</div>
<div class="t" style="left:50px;top:113px;width:18px;text-align:right;color:#aca899;">31</div>
<div class="t" style="left:68px;top:113px;width:18px;text-align:right;">1</div>
<div class="t" style="left:86px;top:113px;width:18px;text-align:right;">2</div>
<div class="t" style="left:104px;top:113px;width:18px;text-align:right;">3</div>
<div class="t" style="left:122px;top:113px;width:18px;text-align:right;">4</div>
<div class="t" style="left:14px;top:128px;width:18px;text-align:right;">5</div>
<div class="t" style="left:32px;top:128px;width:18px;text-align:right;">6</div>
<div class="t" style="left:50px;top:128px;width:18px;text-align:right;">7</div>
<div class="t" style="left:68px;top:128px;width:18px;text-align:right;">8</div>
<div class="t" style="left:86px;top:128px;width:18px;text-align:right;">9</div>
<div class="t" style="left:104px;top:128px;width:18px;text-align:right;">10</div>
<div class="t" style="left:122px;top:128px;width:18px;text-align:right;">11</div>
<div class="t" style="left:14px;top:143px;width:18px;text-align:right;">12</div>
<div class="t" style="left:32px;top:143px;width:18px;text-align:right;">13</div>
<div class="t" style="left:50px;top:143px;width:18px;text-align:right;">14</div>
<div class="t" style="left:68px;top:143px;width:18px;text-align:right;">15</div>
<div class="t" style="left:86px;top:143px;width:18px;text-align:right;">16</div>
<div class="t" style="left:104px;top:143px;width:18px;text-align:right;">17</div>
<div class="t" style="left:122px;top:143px;width:18px;text-align:right;">18</div>
<div class="t" style="left:14px;top:158px;width:18px;text-align:right;">19</div>
<div class="t" style="left:32px;top:158px;width:18px;text-align:right;">20</div>
<div class="t" style="left:50px;top:158px;width:18px;text-align:right;">21</div>
<div class="t" style="left:68px;top:158px;width:18px;text-align:right;">22</div>
<div class="t" style="left:86px;top:158px;width:18px;text-align:right;">23</div>
<div class="t" style="left:104px;top:158px;width:18px;text-align:right;">24</div>
<div class="t" style="left:122px;top:158px;width:18px;text-align:right;">25</div>
<div class="t" style="left:14px;top:173px;width:18px;text-align:right;">26</div>
<div class="t" style="left:32px;top:173px;width:18px;text-align:right;">27</div>
<div class="t" style="left:50px;top:173px;width:18px;text-align:right;">28</div>
<div class="t" style="left:68px;top:173px;width:18px;text-align:right;">29</div>
<div class="a" style="left:89px;top:171px;width:18px;height:15px;background:#3a4e9e"></div>
<div class="t" style="left:86px;top:173px;width:18px;text-align:right;color:#fff;">30</div>
<div class="t" style="left:104px;top:173px;width:18px;text-align:right;color:#aca899;">1</div>
<div class="t" style="left:122px;top:173px;width:18px;text-align:right;color:#aca899;">2</div>
<div class="t" style="left:14px;top:188px;width:18px;text-align:right;color:#aca899;">3</div>
<div class="t" style="left:32px;top:188px;width:18px;text-align:right;color:#aca899;">4</div>
<div class="t" style="left:50px;top:188px;width:18px;text-align:right;color:#aca899;">5</div>
<div class="t" style="left:68px;top:188px;width:18px;text-align:right;color:#aca899;">6</div>
<div class="t" style="left:86px;top:188px;width:18px;text-align:right;color:#aca899;">7</div>
<div class="t" style="left:104px;top:188px;width:18px;text-align:right;color:#aca899;">8</div>
<div class="t" style="left:122px;top:188px;width:18px;text-align:right;color:#aca899;">9</div>
<div class="a" style="left:17px;top:201px;width:126px;height:1px;background:#aca899"></div>
<div class="btn" style="left:24px;top:207px;width:47px"><div class="t" style="left: 7px; top: 2px; letter-spacing: 0.13px;">Today</div>
</div>
<div class="btn" style="left:90px;top:207px;width:47px"><div class="t" style="left: 9px; top: 2px; letter-spacing: -0.26px;">Clear</div>
</div>
<div class="cbx" style="left:8px;top:241px;width:145px;height:21px"><div class="t" style="left: 3px; top: 3px; letter-spacing: -0.09px;">is less than or equal to</div>
<div class="cbtn" style="right:1px;top:1px;width:15px;height:17px"><svg style="left:3px;top:5px" width="9" height="7" viewBox="0 0 9 7"><path d="M1 1l3.500 3.500 3.500-3.500" fill="none" stroke="#4d6185" stroke-width="2"></path></svg>
</div></div>
</div>
<div class="a" id="status"></div>
<div class="a" id="task"><div class="a" id="start"></div></div>

</body></html>
